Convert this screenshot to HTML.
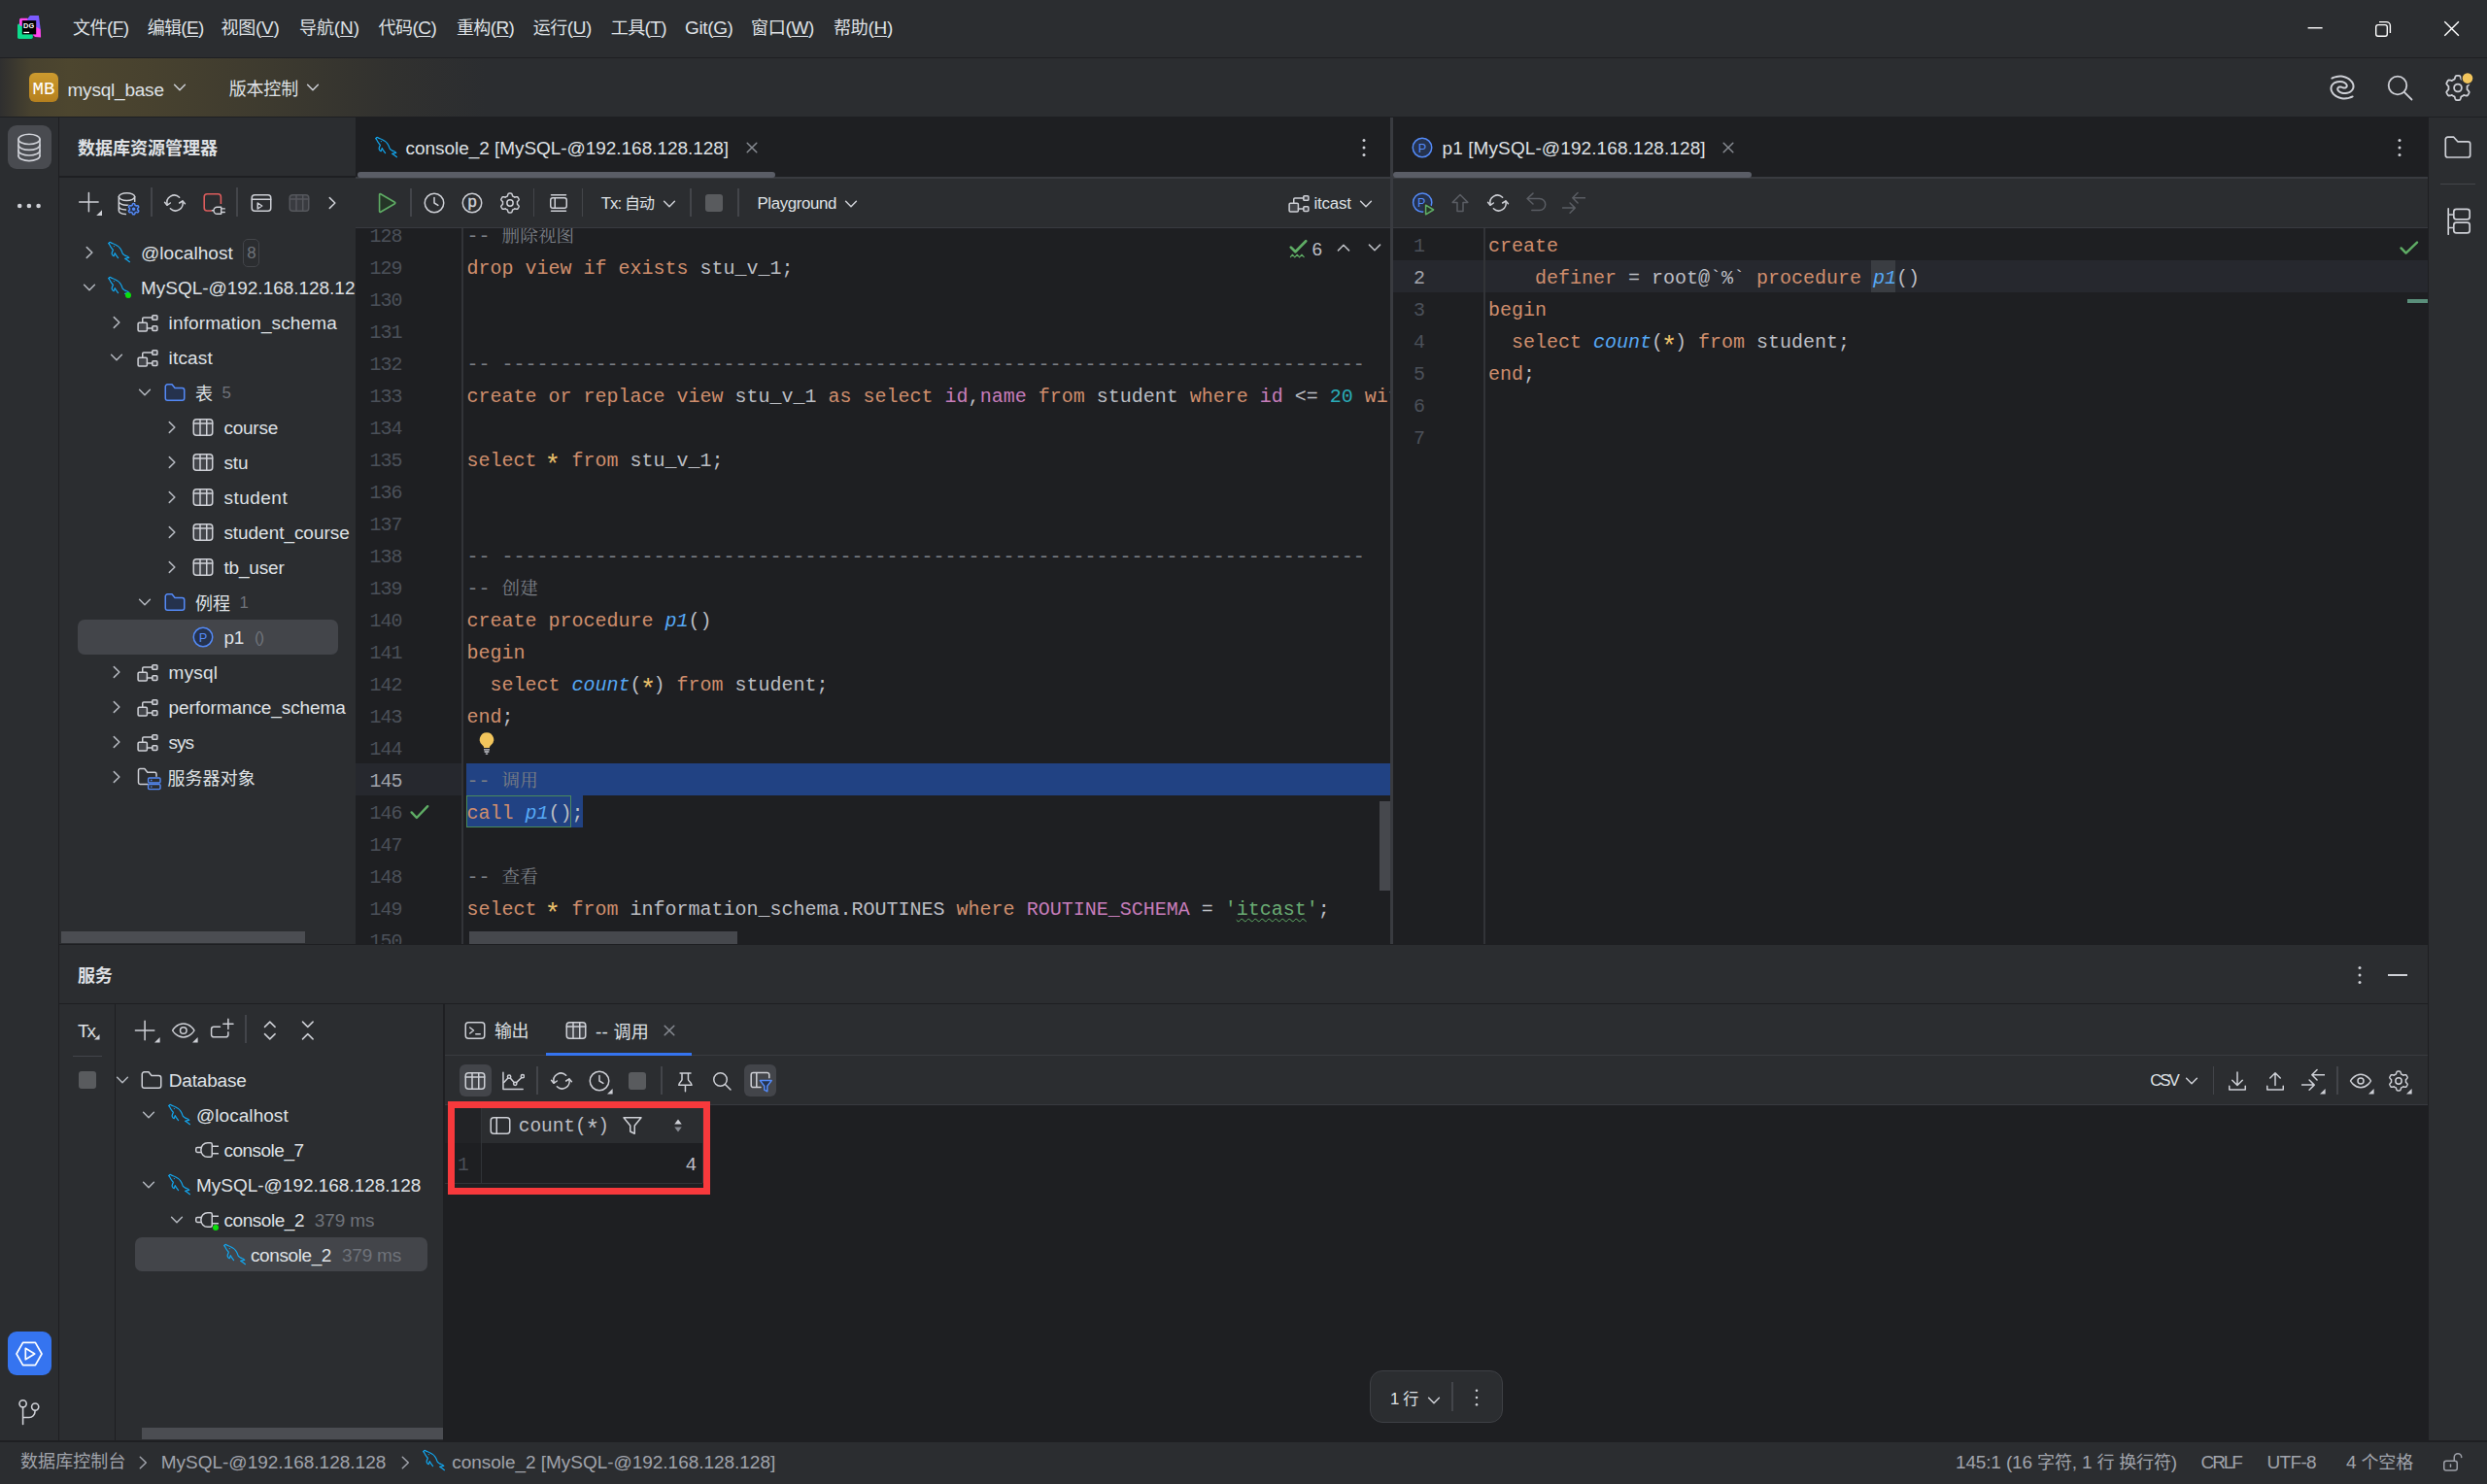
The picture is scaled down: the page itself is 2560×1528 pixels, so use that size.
<!DOCTYPE html>
<html lang="zh-CN"><head><meta charset="utf-8"><title>mysql_base – console_2</title><style>
html,body{margin:0;padding:0;}
body{width:2560px;height:1528px;overflow:hidden;background:#2b2d30;position:relative;font-family:"Liberation Sans","Noto Sans CJK SC",sans-serif;-webkit-font-smoothing:antialiased;}
div,span.t,svg{position:absolute;}
span.t{white-space:pre;display:block;font-family:"Liberation Sans","Noto Sans CJK SC",sans-serif;}
span.t.m{font-family:"Liberation Mono","Noto Sans CJK SC",monospace;}
span.a{font-size:1.055em;}
.cl{white-space:pre;font-family:"Liberation Mono","Noto Serif CJK SC",monospace;font-size:20px;line-height:33px;height:33px;}
.cl span{position:static;}
u{text-decoration-thickness:1px;text-underline-offset:2px;}
</style></head>
<body>
<div style="left:0px;top:0px;width:2560px;height:59px;background:#2b2d30;"></div>
<div style="left:0px;top:59px;width:2560px;height:1px;background:#1e1f22;"></div>
<div style="left:0px;top:60px;width:2560px;height:60px;background:#2b2d30;background:linear-gradient(90deg,#2f2f2f 0px,#48422f 32px,#4d462f 70px,#48422f 150px,#3d3a2f 280px,#31312f 400px,#2b2d30 500px,#2b2d30 100%);"></div>
<div style="left:0px;top:120px;width:2560px;height:1px;background:#1e1f22;"></div>
<div style="left:0px;top:121px;width:60px;height:1362px;background:#2b2d30;"></div>
<div style="left:60px;top:121px;width:1px;height:1362px;background:#1e1f22;"></div>
<div style="left:2500px;top:121px;width:60px;height:1362px;background:#2b2d30;"></div>
<div style="left:2499px;top:121px;width:1px;height:1362px;background:#1e1f22;"></div>
<div style="left:61px;top:121px;width:305px;height:851px;background:#2b2d30;"></div>
<div style="left:61px;top:181px;width:305px;height:2px;background:#1e1f22;"></div>
<div style="left:366px;top:121px;width:2133px;height:851px;background:#1e1f22;"></div>
<div style="left:366px;top:182px;width:2133px;height:2px;background:#393b40;"></div>
<div style="left:366px;top:184px;width:2133px;height:50px;background:#2b2d30;"></div>
<div style="left:366px;top:234px;width:2133px;height:1px;background:#393b40;"></div>
<div style="left:1431px;top:121px;width:3px;height:851px;background:#393b40;"></div>
<div style="left:61px;top:972px;width:2438px;height:1px;background:#1e1f22;"></div>
<div style="left:61px;top:973px;width:2438px;height:510px;background:#2b2d30;"></div>
<div style="left:61px;top:1033px;width:2438px;height:1px;background:#1e1f22;"></div>
<div style="left:118px;top:1034px;width:1px;height:449px;background:#1e1f22;"></div>
<div style="left:456px;top:1034px;width:2px;height:449px;background:#1e1f22;"></div>
<div style="left:458px;top:1086px;width:2041px;height:1px;background:#393b40;"></div>
<div style="left:458px;top:1137px;width:2041px;height:1px;background:#393b40;"></div>
<div style="left:458px;top:1138px;width:2041px;height:345px;background:#1e1f22;"></div>
<div style="left:0px;top:1483px;width:2560px;height:2px;background:#1e1f22;"></div>
<div style="left:0px;top:1485px;width:2560px;height:43px;background:#2b2d30;"></div>
<svg style="left:17px;top:15px;" width="26" height="26" viewBox="0 0 26 26" fill="none"><rect x="1" y="9.5" width="15.8" height="15.4" rx="1.6" fill="#0ddb8c"/>
<rect x="3" y="3.7" width="9.5" height="8" rx="1.6" fill="#ff45ed"/>
<path d="M11.3 4.3L13.9 1.1h9l1.9 14.1-4.8-.2-9-7z" fill="#7b5bff"/>
<path d="M19 12l5.8 3.2.3 8.4-6.1-.6-2.2-2z" fill="#ff45ed"/>
<rect x="5.8" y="6.1" width="14.4" height="14.3" fill="#000"/>
<text x="7.1" y="13.9" font-family="Liberation Sans, sans-serif" font-size="6.6" font-weight="bold" fill="#fff" textLength="11" lengthAdjust="spacingAndGlyphs">DG</text>
<rect x="7.3" y="17.8" width="5.8" height="1.3" fill="#fff"/></svg>
<span id="t1" class="t" style="left:75px;top:15.96px;font-size:18px;line-height:25px;color:#dfe1e5;letter-spacing:-0.553px;">文件<span class="a">(</span><u><span class="a">F</span></u><span class="a">)</span></span>
<span id="t2" class="t" style="left:151.75px;top:15.96px;font-size:18px;line-height:25px;color:#dfe1e5;letter-spacing:-0.716px;">编辑<span class="a">(</span><u><span class="a">E</span></u><span class="a">)</span></span>
<span id="t3" class="t" style="left:227.5px;top:15.96px;font-size:18px;line-height:25px;color:#dfe1e5;letter-spacing:-0.266px;">视图<span class="a">(</span><u><span class="a">V</span></u><span class="a">)</span></span>
<span id="t4" class="t" style="left:308px;top:15.96px;font-size:18px;line-height:25px;color:#dfe1e5;letter-spacing:-0.075px;">导航<span class="a">(</span><u><span class="a">N</span></u><span class="a">)</span></span>
<span id="t5" class="t" style="left:389.5px;top:15.96px;font-size:18px;line-height:25px;color:#dfe1e5;letter-spacing:-0.525px;">代码<span class="a">(</span><u><span class="a">C</span></u><span class="a">)</span></span>
<span id="t6" class="t" style="left:470px;top:15.96px;font-size:18px;line-height:25px;color:#dfe1e5;letter-spacing:-0.625px;">重构<span class="a">(</span><u><span class="a">R</span></u><span class="a">)</span></span>
<span id="t7" class="t" style="left:548.75px;top:15.96px;font-size:18px;line-height:25px;color:#dfe1e5;letter-spacing:-0.475px;">运行<span class="a">(</span><u><span class="a">U</span></u><span class="a">)</span></span>
<span id="t8" class="t" style="left:628.75px;top:15.96px;font-size:18px;line-height:25px;color:#dfe1e5;letter-spacing:-0.603px;">工具<span class="a">(</span><u><span class="a">T</span></u><span class="a">)</span></span>
<span id="t9" class="t" style="left:705px;top:15.96px;font-size:18px;line-height:25px;color:#dfe1e5;letter-spacing:-0.367px;"><span class="a">Git(</span><u><span class="a">G</span></u><span class="a">)</span></span>
<span id="t10" class="t" style="left:773px;top:15.96px;font-size:18px;line-height:25px;color:#dfe1e5;letter-spacing:-0.316px;">窗口<span class="a">(</span><u><span class="a">W</span></u><span class="a">)</span></span>
<span id="t11" class="t" style="left:858px;top:15.96px;font-size:18px;line-height:25px;color:#dfe1e5;letter-spacing:-0.275px;">帮助<span class="a">(</span><u><span class="a">H</span></u><span class="a">)</span></span>
<svg style="left:2370px;top:15px;" width="170" height="30" viewBox="0 0 170 30" fill="none"><path d="M5.6 13.75h15" stroke="#fff" stroke-width="1.4"/>
<rect x="75.7" y="10.6" width="11.6" height="11.6" rx="2.2" stroke="#fff" stroke-width="1.4"/>
<path d="M79 7.6h7.4a4 4 0 0 1 4 4v7.3" stroke="#fff" stroke-width="1.4"/>
<path d="M146.3 7.2l14.6 14.6M160.9 7.2l-14.6 14.6" stroke="#fff" stroke-width="1.4"/></svg>
<div style="left:30px;top:75px;width:30px;height:30px;border-radius:6px;background:linear-gradient(180deg,#cc9a2e,#b5801e);"></div>
<span id="t12" class="t m" style="left:33.5px;top:78.74px;font-size:19px;line-height:27px;color:#fff;letter-spacing:0.094px;">MB</span>
<span id="t13" class="t" style="left:69.5px;top:79.56px;font-size:18px;line-height:25px;color:#dfe1e5;letter-spacing:-0.206px;"><span class="a">mysql_base</span></span>
<svg style="left:172.6px;top:78.0px;" width="24" height="24" viewBox="0 0 16 16" fill="none"><path d="M4.4 6.2l3.6 3.6 3.6-3.6" stroke="#ced0d6" stroke-width="1" fill="none" stroke-linecap="round" stroke-linejoin="round" /></svg>
<span id="t14" class="t" style="left:235.75px;top:79.56px;font-size:18px;line-height:25px;color:#dfe1e5;letter-spacing:-0.188px;">版本控制</span>
<svg style="left:310.4px;top:78.0px;" width="24" height="24" viewBox="0 0 16 16" fill="none"><path d="M4.4 6.2l3.6 3.6 3.6-3.6" stroke="#ced0d6" stroke-width="1" fill="none" stroke-linecap="round" stroke-linejoin="round" /></svg>
<svg style="left:2395.6px;top:74.95px;" width="30" height="30" viewBox="0 0 30 30" fill="none"><path d="M4.35 5.57C4.88 5.38 6.47 4.71 7.50 4.40C8.53 4.09 9.47 3.83 10.55 3.70C11.63 3.57 12.88 3.52 14.00 3.60C15.12 3.68 16.27 3.92 17.30 4.20C18.33 4.48 19.30 4.85 20.20 5.30C21.10 5.75 21.93 6.25 22.70 6.90C23.47 7.55 24.22 8.38 24.80 9.20C25.38 10.02 25.92 10.93 26.20 11.80C26.48 12.67 26.55 13.60 26.50 14.40C26.45 15.20 26.22 15.93 25.90 16.60C25.58 17.27 25.13 17.86 24.60 18.40C24.07 18.94 23.47 19.47 22.70 19.85C21.93 20.23 20.90 20.50 20.00 20.70C19.10 20.90 18.17 21.06 17.30 21.06C16.43 21.06 15.57 20.90 14.80 20.70C14.03 20.50 13.32 20.20 12.70 19.85C12.08 19.50 11.50 19.05 11.10 18.60C10.70 18.15 10.42 17.61 10.30 17.16C10.18 16.71 10.27 16.26 10.40 15.90C10.53 15.54 10.82 15.23 11.10 15.00C11.38 14.77 11.74 14.59 12.10 14.50C12.46 14.41 12.87 14.41 13.25 14.46C13.63 14.51 14.21 14.74 14.40 14.80" stroke="#ced0d6" stroke-width="2" fill="none" stroke-linecap="round" stroke-linejoin="round" /><path d="M25.65 24.43C25.12 24.62 23.53 25.29 22.50 25.60C21.47 25.91 20.53 26.17 19.45 26.30C18.37 26.43 17.12 26.48 16.00 26.40C14.88 26.32 13.73 26.08 12.70 25.80C11.67 25.52 10.70 25.15 9.80 24.70C8.90 24.25 8.07 23.75 7.30 23.10C6.53 22.45 5.78 21.62 5.20 20.80C4.62 19.98 4.08 19.07 3.80 18.20C3.52 17.33 3.45 16.40 3.50 15.60C3.55 14.80 3.78 14.07 4.10 13.40C4.42 12.73 4.87 12.14 5.40 11.60C5.93 11.06 6.53 10.53 7.30 10.15C8.07 9.77 9.10 9.50 10.00 9.30C10.90 9.10 11.83 8.94 12.70 8.94C13.57 8.94 14.43 9.10 15.20 9.30C15.97 9.50 16.68 9.80 17.30 10.15C17.92 10.50 18.50 10.95 18.90 11.40C19.30 11.85 19.58 12.39 19.70 12.84C19.82 13.29 19.73 13.74 19.60 14.10C19.47 14.46 19.18 14.77 18.90 15.00C18.62 15.23 18.26 15.41 17.90 15.50C17.54 15.59 17.13 15.59 16.75 15.54C16.37 15.49 15.79 15.26 15.60 15.20" stroke="#ced0d6" stroke-width="2" fill="none" stroke-linecap="round" stroke-linejoin="round" /></svg>
<svg style="left:2456px;top:76px;" width="30" height="30" viewBox="0 0 30 30" fill="none"><circle cx="12" cy="12" r="9.3" stroke="#ced0d6" stroke-width="1.8" fill="none"/><path d="M18.8 18.8L26.5 26.5" stroke="#ced0d6" stroke-width="1.8" fill="none" stroke-linecap="round" stroke-linejoin="round" /></svg>
<svg style="left:2515.5px;top:75.5px;overflow:visible;" width="29" height="29" viewBox="0 0 29 29" fill="none"><path d="M14.00 1.90L14.44 1.91L14.88 1.93L15.32 1.97L15.75 2.02L16.16 2.24L16.48 2.83L16.75 3.46L16.98 4.10L17.17 4.74L17.33 5.34L17.60 5.60L17.90 5.73L18.21 5.87L18.51 6.02L18.80 6.19L19.09 6.36L19.37 6.54L19.64 6.73L19.91 6.94L20.27 7.03L20.87 6.87L21.51 6.72L22.19 6.59L22.87 6.51L23.54 6.50L23.93 6.74L24.19 7.09L24.45 7.45L24.69 7.82L24.91 8.20L25.13 8.58L25.32 8.98L25.51 9.38L25.68 9.78L25.70 10.24L25.35 10.81L24.94 11.36L24.50 11.88L24.04 12.37L23.60 12.81L23.51 13.16L23.55 13.50L23.58 13.83L23.59 14.16L23.60 14.50L23.59 14.84L23.58 15.17L23.55 15.50L23.51 15.84L23.60 16.19L24.04 16.63L24.50 17.12L24.94 17.64L25.35 18.19L25.70 18.76L25.68 19.22L25.51 19.62L25.32 20.02L25.13 20.42L24.91 20.80L24.69 21.18L24.45 21.55L24.19 21.91L23.93 22.26L23.54 22.50L22.87 22.49L22.19 22.41L21.51 22.28L20.87 22.13L20.27 21.97L19.91 22.06L19.64 22.27L19.37 22.46L19.09 22.64L18.80 22.81L18.51 22.98L18.21 23.13L17.90 23.27L17.60 23.40L17.33 23.66L17.17 24.26L16.98 24.90L16.75 25.54L16.48 26.17L16.16 26.76L15.75 26.98L15.32 27.03L14.88 27.07L14.44 27.09L14.00 27.10L13.56 27.09L13.12 27.07L12.68 27.03L12.25 26.98L11.84 26.76L11.52 26.17L11.25 25.54L11.02 24.90L10.83 24.26L10.67 23.66L10.40 23.40L10.10 23.27L9.79 23.13L9.49 22.98L9.20 22.81L8.91 22.64L8.63 22.46L8.36 22.27L8.09 22.06L7.73 21.97L7.13 22.13L6.49 22.28L5.81 22.41L5.13 22.49L4.46 22.50L4.07 22.26L3.81 21.91L3.55 21.55L3.31 21.18L3.09 20.80L2.87 20.42L2.68 20.02L2.49 19.62L2.32 19.22L2.30 18.76L2.65 18.19L3.06 17.64L3.50 17.12L3.96 16.63L4.40 16.19L4.49 15.84L4.45 15.50L4.42 15.17L4.41 14.84L4.40 14.50L4.41 14.16L4.42 13.83L4.45 13.50L4.49 13.16L4.40 12.81L3.96 12.37L3.50 11.88L3.06 11.36L2.65 10.81L2.30 10.24L2.32 9.78L2.49 9.38L2.68 8.98L2.87 8.58L3.09 8.20L3.31 7.82L3.55 7.45L3.81 7.09L4.07 6.74L4.46 6.50L5.13 6.51L5.81 6.59L6.49 6.72L7.13 6.87L7.73 7.03L8.09 6.94L8.36 6.73L8.63 6.54L8.91 6.36L9.20 6.19L9.49 6.02L9.79 5.87L10.10 5.73L10.40 5.60L10.67 5.34L10.83 4.74L11.02 4.10L11.25 3.46L11.52 2.83L11.84 2.24L12.25 2.02L12.68 1.97L13.12 1.93L13.56 1.91Z" stroke="#ced0d6" stroke-width="1.8" fill="none" stroke-linecap="round" stroke-linejoin="round" /><circle cx="14" cy="14.5" r="3.9" stroke="#ced0d6" stroke-width="1.8" fill="none"/><circle cx="24" cy="4.6" r="6.6" fill="#2b2d30"/><circle cx="24" cy="4.6" r="5.3" fill="#f2c55c"/></svg>
<div style="left:7.5px;top:129px;width:45px;height:45px;border-radius:9px;background:#494b50;"></div>
<svg style="left:15px;top:135px;" width="30" height="34" viewBox="0 0 30 34" fill="none"><path d="M4 8.4v17.2M26 8.4v17.2" stroke="#ced0d6" stroke-width="1.6" fill="none" stroke-linecap="round" stroke-linejoin="round" /><ellipse cx="15" cy="8.4" rx="11" ry="5.1" stroke="#ced0d6" stroke-width="1.6"/><path d="M4 14.3c0 2.8 4.9 5.1 11 5.1s11-2.3 11-5.1M4 19.9c0 2.8 4.9 5.1 11 5.1s11-2.3 11-5.1M4 25.5c0 2.8 4.9 5.1 11 5.1s11-2.3 11-5.1" stroke="#ced0d6" stroke-width="1.6" fill="none" stroke-linecap="round" stroke-linejoin="round" /></svg>
<svg style="left:15px;top:205px;" width="30" height="14" viewBox="0 0 30 14" fill="none"><circle cx="5.2" cy="7" r="2.3" fill="#ced0d6"/><circle cx="14.9" cy="7" r="2.3" fill="#ced0d6"/><circle cx="24.6" cy="7" r="2.3" fill="#ced0d6"/></svg>
<div style="left:7.5px;top:1371px;width:45px;height:45px;border-radius:9px;background:#3574f0;"></div>
<svg style="left:15px;top:1378.5px;" width="30" height="30" viewBox="0 0 30 30" fill="none"><path d="M8.6 3.4h12.8L28 15 21.4 26.6H8.6L2 15z" stroke="#fff" stroke-width="1.7" fill="none" stroke-linecap="round" stroke-linejoin="round" /><path d="M11.3 9.3v11.4l9.4-5.7z" stroke="#fff" stroke-width="1.7" fill="none" stroke-linecap="round" stroke-linejoin="round" /></svg>
<svg style="left:15px;top:1438px;" width="30" height="32" viewBox="0 0 30 32" fill="none"><circle cx="8.6" cy="7.3" r="3.6" stroke="#ced0d6" stroke-width="1.6" fill="none"/><circle cx="21.2" cy="10.6" r="3.6" stroke="#ced0d6" stroke-width="1.6" fill="none"/><path d="M8.6 11v17.5M8.6 21.5h6.4a6 6 0 0 0 6-6v-1.2" stroke="#ced0d6" stroke-width="1.6" fill="none" stroke-linecap="round" stroke-linejoin="round" /></svg>
<svg style="left:2515px;top:138px;" width="30" height="27" viewBox="0 0 30 27" fill="none"><path d="M2.3 5.5a2.3 2.3 0 0 1 2.3-2.3h6.2l4 4.6h10.6a2.3 2.3 0 0 1 2.3 2.3v11.6a2.3 2.3 0 0 1-2.3 2.3H4.6a2.3 2.3 0 0 1-2.3-2.3z" stroke="#ced0d6" stroke-width="1.7" fill="none" stroke-linecap="round" stroke-linejoin="round" /></svg>
<div style="left:2512px;top:189px;width:36px;height:1px;background:#43454a;"></div>
<svg style="left:2516px;top:212px;" width="30" height="32" viewBox="0 0 30 32" fill="none"><path d="M4.2 2.8v26.4M4.2 9h5M4.2 22.5h5" stroke="#ced0d6" stroke-width="1.7" fill="none" stroke-linecap="round" stroke-linejoin="round" /><rect x="9.8" y="3.3" width="16.4" height="10.6" rx="2.6" stroke="#ced0d6" stroke-width="1.7" fill="none"/><rect x="9.8" y="17.2" width="16.4" height="10.6" rx="2.6" stroke="#ced0d6" stroke-width="1.7" fill="none"/></svg>
<div style="left:0;top:0;width:366px;height:972px;overflow:hidden;">
<span id="t15" class="t" style="left:80px;top:140.56px;font-size:18px;line-height:25px;color:#dfe1e5;letter-spacing:0.000px;font-weight:bold;">数据库资源管理器</span>
<svg style="left:79px;top:196px;" width="28" height="28" viewBox="0 0 28 28" fill="none"><path d="M12.4 2.4v19.4M2.7 12.1h19.4" stroke="#ced0d6" stroke-width="1.5" fill="none" stroke-linecap="round" stroke-linejoin="round" /><path d="M26 20.2v5.8h-5.8z" fill="#ced0d6"/></svg>
<svg style="left:119px;top:196px;" width="28" height="28" viewBox="0 0 28 28" fill="none"><ellipse cx="11.5" cy="6.6" rx="8.2" ry="3.9" stroke="#ced0d6" stroke-width="1.5"/><path d="M3.3 6.6v14.2c0 1.9 3 3.5 7 3.8M19.7 6.6v5M3.3 11.5c0 2.1 3.7 3.8 8.2 3.8 1.2 0 2.3-.1 3.3-.3M3.3 16.2c0 2 3.2 3.6 7.3 3.8" stroke="#ced0d6" stroke-width="1.5" fill="none" stroke-linecap="round" stroke-linejoin="round" /><circle cx="18.6" cy="19.2" r="7" fill="#2b2d30"/><path d="M18.60 13.60L18.99 13.61L19.38 13.65L19.70 14.05L19.90 14.67L20.03 15.28L20.27 15.45L20.52 15.58L20.77 15.72L21.01 15.88L21.28 16.00L21.87 15.81L22.51 15.68L23.01 15.75L23.24 16.07L23.45 16.40L23.63 16.75L23.79 17.10L23.61 17.57L23.17 18.06L22.71 18.48L22.68 18.77L22.70 19.06L22.70 19.34L22.68 19.63L22.71 19.92L23.17 20.34L23.61 20.83L23.79 21.30L23.63 21.65L23.45 22.00L23.24 22.33L23.01 22.65L22.51 22.72L21.87 22.59L21.28 22.40L21.01 22.52L20.77 22.68L20.52 22.82L20.27 22.95L20.03 23.12L19.90 23.73L19.70 24.35L19.38 24.75L18.99 24.79L18.60 24.80L18.21 24.79L17.82 24.75L17.50 24.35L17.30 23.73L17.17 23.12L16.93 22.95L16.68 22.82L16.43 22.68L16.19 22.52L15.92 22.40L15.33 22.59L14.69 22.72L14.19 22.65L13.96 22.33L13.75 22.00L13.57 21.65L13.41 21.30L13.59 20.83L14.03 20.34L14.49 19.92L14.52 19.63L14.50 19.34L14.50 19.06L14.52 18.77L14.49 18.48L14.03 18.06L13.59 17.57L13.41 17.10L13.57 16.75L13.75 16.40L13.96 16.07L14.19 15.75L14.69 15.68L15.33 15.81L15.92 16.00L16.19 15.88L16.43 15.72L16.68 15.58L16.93 15.45L17.17 15.28L17.30 14.67L17.50 14.05L17.82 13.65L18.21 13.61Z" stroke="#548af7" stroke-width="1.5" fill="#25324d" stroke-linecap="round" stroke-linejoin="round" /><circle cx="18.6" cy="19.2" r="1.1" stroke="#548af7" stroke-width="1.3" fill="#548af7"/></svg>
<div style="left:155px;top:193px;width:1.5px;height:30px;background:#43454a;"></div>
<svg style="left:168.0px;top:197.0px;" width="24" height="24" viewBox="0 0 16 16" fill="none"><g transform="translate(8 8) scale(0.94) translate(-8 -8)"><path d="M2.5 9.2A5.3 5.3 0 0 1 11.3 3.9M13.5 6.8A5.3 5.3 0 0 1 4.7 12.1" stroke="#ced0d6" stroke-width="1.06" fill="none" stroke-linecap="round" stroke-linejoin="round" /><path d="M0.6 7.5L2.3 9.6L4.7 8.0M11.3 8.0L13.7 6.5L15.4 8.5" stroke="#ced0d6" stroke-width="1.06" fill="none" stroke-linecap="round" stroke-linejoin="round" /></g></svg>
<svg style="left:207px;top:196px;" width="28" height="28" viewBox="0 0 28 28" fill="none"><rect x="3.2" y="3.8" width="17.2" height="17.2" rx="3" stroke="#db5c5c" stroke-width="1.6" fill="none"/><rect x="11" y="14" width="17" height="14" fill="#2b2d30"/><path d="M16.5 17.2h4.2v7h-4.2a3.5 3.5 0 0 1 0-7zM20.7 18.9h3.6M20.7 22.5h3.6M13 20.7h-1.6" stroke="#ced0d6" stroke-width="1.4" fill="none" stroke-linecap="round" stroke-linejoin="round" /></svg>
<div style="left:243px;top:193px;width:1.5px;height:30px;background:#43454a;"></div>
<svg style="left:257.0px;top:197.0px;" width="24" height="24" viewBox="0 0 16 16" fill="none"><rect x="1.5" y="2.5" width="13" height="11" rx="2" stroke="#ced0d6" stroke-width="1" fill="none"/><path d="M1.5 5.5h13" stroke="#ced0d6" stroke-width="1" fill="none" stroke-linecap="round" stroke-linejoin="round" /><path d="M5.5 8l3 2-3 2z" stroke="#ced0d6" stroke-width="1" fill="none" stroke-linecap="round" stroke-linejoin="round" /></svg>
<svg style="left:295.5px;top:197.0px;" width="24" height="24" viewBox="0 0 16 16" fill="none"><rect x="1.5" y="2.5" width="13" height="11" rx="2" stroke="#55575c" stroke-width="1" fill="#393b40"/><path d="M1.5 5.4h13M6 2.5v11M10.5 2.5v11" stroke="#55575c" stroke-width="1" fill="none" stroke-linecap="round" stroke-linejoin="round" /></svg>
<svg style="left:329.5px;top:197.0px;" width="24" height="24" viewBox="0 0 16 16" fill="none"><path d="M6.2 4.4l3.7 3.6-3.7 3.6" stroke="#ced0d6" stroke-width="1" fill="none" stroke-linecap="round" stroke-linejoin="round" /></svg>
<div style="left:79.5px;top:637.5px;width:268px;height:36px;border-radius:7px;background:#43454a;"></div>
<svg style="left:79.5px;top:248.0px;" width="24" height="24" viewBox="0 0 16 16" fill="none"><path d="M6.2 4.4l3.7 3.6-3.7 3.6" stroke="#b4b8bf" stroke-width="1" fill="none" stroke-linecap="round" stroke-linejoin="round" /></svg>
<svg style="left:111.2px;top:248.0px;" width="24" height="24" viewBox="0 0 16 16" fill="none"><path d="M0.58 1.67C0.74 1.53 1.15 0.86 1.55 0.86C1.95 0.86 2.43 1.40 3.00 1.67C3.57 1.94 4.30 2.15 4.95 2.47C5.60 2.79 6.30 3.14 6.89 3.60C7.48 4.06 8.07 4.65 8.50 5.22C8.93 5.79 9.18 6.38 9.48 7.00C9.78 7.62 9.89 8.43 10.29 8.94C10.69 9.45 11.34 9.76 11.90 10.08C12.46 10.40 13.25 10.64 13.68 10.88C14.11 11.12 14.36 11.42 14.49 11.53L13.36 11.77L11.74 12.18L13.3 13.2L14.98 14.44" stroke="#12a6ee" stroke-width="0.8" fill="none" stroke-linecap="round" stroke-linejoin="round" /><path d="M0.58 1.67C0.71 1.89 1.12 2.50 1.39 2.96C1.66 3.42 1.93 3.99 2.20 4.42C2.47 4.85 2.77 5.23 3.00 5.55C3.23 5.87 3.57 6.01 3.57 6.36C3.57 6.71 3.13 7.25 3.00 7.65C2.87 8.05 2.71 8.40 2.77 8.78C2.83 9.16 3.10 9.63 3.33 9.91C3.56 10.19 4.00 10.38 4.14 10.48L4.46 9.59L4.79 8.46L5.6 9.75L7.05 11.69" stroke="#12a6ee" stroke-width="0.8" fill="none" stroke-linecap="round" stroke-linejoin="round" /><circle cx="4.22" cy="3.69" r="0.42" fill="#12a6ee"/></svg>
<span id="t16" class="t" style="left:145.0px;top:248.26px;font-size:18px;line-height:25px;color:#dfe1e5;letter-spacing:0.060px;"><span class="a">@localhost</span></span>
<div style="left:250px;top:245.5px;width:17px;height:29px;border-radius:5px;border:1px solid #43454a;box-sizing:border-box;"></div>
<span id="t17" class="t" style="left:254.3px;top:249.86px;font-size:16px;line-height:22px;color:#6f737a;"><span class="a">8</span></span>
<svg style="left:79.5px;top:284.0px;" width="24" height="24" viewBox="0 0 16 16" fill="none"><path d="M4.4 6.2l3.6 3.6 3.6-3.6" stroke="#b4b8bf" stroke-width="1" fill="none" stroke-linecap="round" stroke-linejoin="round" /></svg>
<svg style="left:111.2px;top:284.0px;" width="24" height="24" viewBox="0 0 16 16" fill="none"><path d="M0.58 1.67C0.74 1.53 1.15 0.86 1.55 0.86C1.95 0.86 2.43 1.40 3.00 1.67C3.57 1.94 4.30 2.15 4.95 2.47C5.60 2.79 6.30 3.14 6.89 3.60C7.48 4.06 8.07 4.65 8.50 5.22C8.93 5.79 9.18 6.38 9.48 7.00C9.78 7.62 9.89 8.43 10.29 8.94C10.69 9.45 11.34 9.76 11.90 10.08C12.46 10.40 13.25 10.64 13.68 10.88C14.11 11.12 14.36 11.42 14.49 11.53L13.36 11.77L11.74 12.18L13.3 13.2L14.98 14.44" stroke="#12a6ee" stroke-width="0.8" fill="none" stroke-linecap="round" stroke-linejoin="round" /><path d="M0.58 1.67C0.71 1.89 1.12 2.50 1.39 2.96C1.66 3.42 1.93 3.99 2.20 4.42C2.47 4.85 2.77 5.23 3.00 5.55C3.23 5.87 3.57 6.01 3.57 6.36C3.57 6.71 3.13 7.25 3.00 7.65C2.87 8.05 2.71 8.40 2.77 8.78C2.83 9.16 3.10 9.63 3.33 9.91C3.56 10.19 4.00 10.38 4.14 10.48L4.46 9.59L4.79 8.46L5.6 9.75L7.05 11.69" stroke="#12a6ee" stroke-width="0.8" fill="none" stroke-linecap="round" stroke-linejoin="round" /><circle cx="4.22" cy="3.69" r="0.42" fill="#12a6ee"/></svg>
<div style="left:129.0px;top:301.2px;width:6.2px;height:6.2px;border-radius:50%;background:#0be00b;"></div>
<span id="t18" class="t" style="left:145.0px;top:284.26px;font-size:18px;line-height:25px;color:#dfe1e5;letter-spacing:-0.019px;"><span class="a">MySQL-@192.168.128.128</span></span>
<svg style="left:108.0px;top:320.0px;" width="24" height="24" viewBox="0 0 16 16" fill="none"><path d="M6.2 4.4l3.7 3.6-3.7 3.6" stroke="#b4b8bf" stroke-width="1" fill="none" stroke-linecap="round" stroke-linejoin="round" /></svg>
<svg style="left:140.0px;top:320.0px;" width="24" height="24" viewBox="0 0 16 16" fill="none"><rect x="1.4" y="8.2" width="6.2" height="5.8" rx="0.8" stroke="#ced0d6" stroke-width="1" fill="#43454a"/><rect x="11.2" y="3.1" width="3.4" height="3.1" rx="0.6" stroke="#ced0d6" stroke-width="1" fill="#43454a"/><rect x="11.2" y="10.5" width="3.4" height="3.1" rx="0.6" stroke="#ced0d6" stroke-width="1" fill="#43454a"/><path d="M4.5 8.2V5.4a.8.8 0 0 1 .8-.8H11.2M7.6 12H11.2" stroke="#ced0d6" stroke-width="1" fill="none" stroke-linecap="round" stroke-linejoin="round" /></svg>
<span id="t19" class="t" style="left:173.6px;top:320.26px;font-size:18px;line-height:25px;color:#dfe1e5;letter-spacing:0.130px;"><span class="a">information_schema</span></span>
<svg style="left:108.0px;top:356.0px;" width="24" height="24" viewBox="0 0 16 16" fill="none"><path d="M4.4 6.2l3.6 3.6 3.6-3.6" stroke="#b4b8bf" stroke-width="1" fill="none" stroke-linecap="round" stroke-linejoin="round" /></svg>
<svg style="left:140.0px;top:356.0px;" width="24" height="24" viewBox="0 0 16 16" fill="none"><rect x="1.4" y="8.2" width="6.2" height="5.8" rx="0.8" stroke="#ced0d6" stroke-width="1" fill="#43454a"/><rect x="11.2" y="3.1" width="3.4" height="3.1" rx="0.6" stroke="#ced0d6" stroke-width="1" fill="#43454a"/><rect x="11.2" y="10.5" width="3.4" height="3.1" rx="0.6" stroke="#ced0d6" stroke-width="1" fill="#43454a"/><path d="M4.5 8.2V5.4a.8.8 0 0 1 .8-.8H11.2M7.6 12H11.2" stroke="#ced0d6" stroke-width="1" fill="none" stroke-linecap="round" stroke-linejoin="round" /></svg>
<span id="t20" class="t" style="left:173.6px;top:356.26px;font-size:18px;line-height:25px;color:#dfe1e5;letter-spacing:0.165px;"><span class="a">itcast</span></span>
<svg style="left:137.0px;top:392.0px;" width="24" height="24" viewBox="0 0 16 16" fill="none"><path d="M4.4 6.2l3.6 3.6 3.6-3.6" stroke="#b4b8bf" stroke-width="1" fill="none" stroke-linecap="round" stroke-linejoin="round" /></svg>
<svg style="left:168.0px;top:392.0px;" width="24" height="24" viewBox="0 0 16 16" fill="none"><path d="M1.5 4a1.5 1.5 0 0 1 1.5-1.5h3l2 2.5h5a1.5 1.5 0 0 1 1.5 1.5v5.5a1.5 1.5 0 0 1-1.5 1.5H3a1.5 1.5 0 0 1-1.5-1.5z" stroke="#548af7" stroke-width="1" fill="#25324d" stroke-linecap="round" stroke-linejoin="round" /></svg>
<span id="t21" class="t" style="left:201px;top:393.76px;font-size:18px;line-height:25px;color:#dfe1e5;">表</span>
<span id="t22" class="t" style="left:228.6px;top:394.06px;font-size:16px;line-height:22px;color:#6f737a;"><span class="a">5</span></span>
<svg style="left:164.6px;top:428.0px;" width="24" height="24" viewBox="0 0 16 16" fill="none"><path d="M6.2 4.4l3.7 3.6-3.7 3.6" stroke="#b4b8bf" stroke-width="1" fill="none" stroke-linecap="round" stroke-linejoin="round" /></svg>
<svg style="left:197.0px;top:428.0px;" width="24" height="24" viewBox="0 0 16 16" fill="none"><rect x="1.5" y="2.5" width="13" height="11" rx="2" stroke="#ced0d6" stroke-width="1" fill="#43454a"/><path d="M1.5 5.4h13M6 2.5v11M10.5 2.5v11" stroke="#ced0d6" stroke-width="1" fill="none" stroke-linecap="round" stroke-linejoin="round" /></svg>
<span id="t23" class="t" style="left:230.4px;top:428.26px;font-size:18px;line-height:25px;color:#dfe1e5;letter-spacing:-0.231px;"><span class="a">course</span></span>
<svg style="left:164.6px;top:464.0px;" width="24" height="24" viewBox="0 0 16 16" fill="none"><path d="M6.2 4.4l3.7 3.6-3.7 3.6" stroke="#b4b8bf" stroke-width="1" fill="none" stroke-linecap="round" stroke-linejoin="round" /></svg>
<svg style="left:197.0px;top:464.0px;" width="24" height="24" viewBox="0 0 16 16" fill="none"><rect x="1.5" y="2.5" width="13" height="11" rx="2" stroke="#ced0d6" stroke-width="1" fill="#43454a"/><path d="M1.5 5.4h13M6 2.5v11M10.5 2.5v11" stroke="#ced0d6" stroke-width="1" fill="none" stroke-linecap="round" stroke-linejoin="round" /></svg>
<span id="t24" class="t" style="left:230.4px;top:464.26px;font-size:18px;line-height:25px;color:#dfe1e5;letter-spacing:-0.076px;"><span class="a">stu</span></span>
<svg style="left:164.6px;top:500.0px;" width="24" height="24" viewBox="0 0 16 16" fill="none"><path d="M6.2 4.4l3.7 3.6-3.7 3.6" stroke="#b4b8bf" stroke-width="1" fill="none" stroke-linecap="round" stroke-linejoin="round" /></svg>
<svg style="left:197.0px;top:500.0px;" width="24" height="24" viewBox="0 0 16 16" fill="none"><rect x="1.5" y="2.5" width="13" height="11" rx="2" stroke="#ced0d6" stroke-width="1" fill="#43454a"/><path d="M1.5 5.4h13M6 2.5v11M10.5 2.5v11" stroke="#ced0d6" stroke-width="1" fill="none" stroke-linecap="round" stroke-linejoin="round" /></svg>
<span id="t25" class="t" style="left:230.4px;top:500.26px;font-size:18px;line-height:25px;color:#dfe1e5;letter-spacing:0.503px;"><span class="a">student</span></span>
<svg style="left:164.6px;top:536.0px;" width="24" height="24" viewBox="0 0 16 16" fill="none"><path d="M6.2 4.4l3.7 3.6-3.7 3.6" stroke="#b4b8bf" stroke-width="1" fill="none" stroke-linecap="round" stroke-linejoin="round" /></svg>
<svg style="left:197.0px;top:536.0px;" width="24" height="24" viewBox="0 0 16 16" fill="none"><rect x="1.5" y="2.5" width="13" height="11" rx="2" stroke="#ced0d6" stroke-width="1" fill="#43454a"/><path d="M1.5 5.4h13M6 2.5v11M10.5 2.5v11" stroke="#ced0d6" stroke-width="1" fill="none" stroke-linecap="round" stroke-linejoin="round" /></svg>
<span id="t26" class="t" style="left:230.4px;top:536.26px;font-size:18px;line-height:25px;color:#dfe1e5;letter-spacing:-0.038px;"><span class="a">student_course</span></span>
<svg style="left:164.6px;top:572.0px;" width="24" height="24" viewBox="0 0 16 16" fill="none"><path d="M6.2 4.4l3.7 3.6-3.7 3.6" stroke="#b4b8bf" stroke-width="1" fill="none" stroke-linecap="round" stroke-linejoin="round" /></svg>
<svg style="left:197.0px;top:572.0px;" width="24" height="24" viewBox="0 0 16 16" fill="none"><rect x="1.5" y="2.5" width="13" height="11" rx="2" stroke="#ced0d6" stroke-width="1" fill="#43454a"/><path d="M1.5 5.4h13M6 2.5v11M10.5 2.5v11" stroke="#ced0d6" stroke-width="1" fill="none" stroke-linecap="round" stroke-linejoin="round" /></svg>
<span id="t27" class="t" style="left:230.4px;top:572.26px;font-size:18px;line-height:25px;color:#dfe1e5;letter-spacing:-0.161px;"><span class="a">tb_user</span></span>
<svg style="left:137.0px;top:608.0px;" width="24" height="24" viewBox="0 0 16 16" fill="none"><path d="M4.4 6.2l3.6 3.6 3.6-3.6" stroke="#b4b8bf" stroke-width="1" fill="none" stroke-linecap="round" stroke-linejoin="round" /></svg>
<svg style="left:168.0px;top:608.0px;" width="24" height="24" viewBox="0 0 16 16" fill="none"><path d="M1.5 4a1.5 1.5 0 0 1 1.5-1.5h3l2 2.5h5a1.5 1.5 0 0 1 1.5 1.5v5.5a1.5 1.5 0 0 1-1.5 1.5H3a1.5 1.5 0 0 1-1.5-1.5z" stroke="#548af7" stroke-width="1" fill="#25324d" stroke-linecap="round" stroke-linejoin="round" /></svg>
<span id="t28" class="t" style="left:201px;top:609.76px;font-size:18px;line-height:25px;color:#dfe1e5;">例程</span>
<span id="t29" class="t" style="left:246.6px;top:610.06px;font-size:16px;line-height:22px;color:#6f737a;"><span class="a">1</span></span>
<svg style="left:197.0px;top:644.0px;" width="24" height="24" viewBox="0 0 16 16" fill="none"><circle cx="8" cy="8" r="6.5" stroke="#548af7" stroke-width="1" fill="#25324d"/><text x="8" y="11" font-family="Liberation Sans, sans-serif" font-size="8.5" font-weight="normal" fill="#548af7" text-anchor="middle" >P</text></svg>
<span id="t30" class="t" style="left:230.4px;top:644.26px;font-size:18px;line-height:25px;color:#dfe1e5;letter-spacing:-0.163px;"><span class="a">p1</span></span>
<span id="t31" class="t" style="left:262px;top:646.06px;font-size:16px;line-height:22px;color:#6f737a;letter-spacing:-1.117px;"><span class="a">()</span></span>
<svg style="left:108.0px;top:680.0px;" width="24" height="24" viewBox="0 0 16 16" fill="none"><path d="M6.2 4.4l3.7 3.6-3.7 3.6" stroke="#b4b8bf" stroke-width="1" fill="none" stroke-linecap="round" stroke-linejoin="round" /></svg>
<svg style="left:140.0px;top:680.0px;" width="24" height="24" viewBox="0 0 16 16" fill="none"><rect x="1.4" y="8.2" width="6.2" height="5.8" rx="0.8" stroke="#ced0d6" stroke-width="1" fill="#43454a"/><rect x="11.2" y="3.1" width="3.4" height="3.1" rx="0.6" stroke="#ced0d6" stroke-width="1" fill="#43454a"/><rect x="11.2" y="10.5" width="3.4" height="3.1" rx="0.6" stroke="#ced0d6" stroke-width="1" fill="#43454a"/><path d="M4.5 8.2V5.4a.8.8 0 0 1 .8-.8H11.2M7.6 12H11.2" stroke="#ced0d6" stroke-width="1" fill="none" stroke-linecap="round" stroke-linejoin="round" /></svg>
<span id="t32" class="t" style="left:173.6px;top:680.26px;font-size:18px;line-height:25px;color:#dfe1e5;letter-spacing:0.224px;"><span class="a">mysql</span></span>
<svg style="left:108.0px;top:716.0px;" width="24" height="24" viewBox="0 0 16 16" fill="none"><path d="M6.2 4.4l3.7 3.6-3.7 3.6" stroke="#b4b8bf" stroke-width="1" fill="none" stroke-linecap="round" stroke-linejoin="round" /></svg>
<svg style="left:140.0px;top:716.0px;" width="24" height="24" viewBox="0 0 16 16" fill="none"><rect x="1.4" y="8.2" width="6.2" height="5.8" rx="0.8" stroke="#ced0d6" stroke-width="1" fill="#43454a"/><rect x="11.2" y="3.1" width="3.4" height="3.1" rx="0.6" stroke="#ced0d6" stroke-width="1" fill="#43454a"/><rect x="11.2" y="10.5" width="3.4" height="3.1" rx="0.6" stroke="#ced0d6" stroke-width="1" fill="#43454a"/><path d="M4.5 8.2V5.4a.8.8 0 0 1 .8-.8H11.2M7.6 12H11.2" stroke="#ced0d6" stroke-width="1" fill="none" stroke-linecap="round" stroke-linejoin="round" /></svg>
<span id="t33" class="t" style="left:173.6px;top:716.26px;font-size:18px;line-height:25px;color:#dfe1e5;letter-spacing:-0.078px;"><span class="a">performance_schema</span></span>
<svg style="left:108.0px;top:752.0px;" width="24" height="24" viewBox="0 0 16 16" fill="none"><path d="M6.2 4.4l3.7 3.6-3.7 3.6" stroke="#b4b8bf" stroke-width="1" fill="none" stroke-linecap="round" stroke-linejoin="round" /></svg>
<svg style="left:140.0px;top:752.0px;" width="24" height="24" viewBox="0 0 16 16" fill="none"><rect x="1.4" y="8.2" width="6.2" height="5.8" rx="0.8" stroke="#ced0d6" stroke-width="1" fill="#43454a"/><rect x="11.2" y="3.1" width="3.4" height="3.1" rx="0.6" stroke="#ced0d6" stroke-width="1" fill="#43454a"/><rect x="11.2" y="10.5" width="3.4" height="3.1" rx="0.6" stroke="#ced0d6" stroke-width="1" fill="#43454a"/><path d="M4.5 8.2V5.4a.8.8 0 0 1 .8-.8H11.2M7.6 12H11.2" stroke="#ced0d6" stroke-width="1" fill="none" stroke-linecap="round" stroke-linejoin="round" /></svg>
<span id="t34" class="t" style="left:173.6px;top:752.26px;font-size:18px;line-height:25px;color:#dfe1e5;letter-spacing:-1.028px;"><span class="a">sys</span></span>
<svg style="left:108.0px;top:788.0px;" width="24" height="24" viewBox="0 0 16 16" fill="none"><path d="M6.2 4.4l3.7 3.6-3.7 3.6" stroke="#b4b8bf" stroke-width="1" fill="none" stroke-linecap="round" stroke-linejoin="round" /></svg>
<svg style="left:140px;top:788px;" width="26" height="26" viewBox="0 0 26 26" fill="none"><path d="M12 19.5H4.2a1.7 1.7 0 0 1-1.7-1.7V5.2a1.7 1.7 0 0 1 1.7-1.7h4.6l3 3.7h7.5a1.7 1.7 0 0 1 1.7 1.7v2.3" stroke="#ced0d6" stroke-width="1.5" fill="none" stroke-linecap="round" stroke-linejoin="round" /><rect x="12.6" y="13" width="12.4" height="5" rx="1" fill="#2b2d30" stroke="#548af7" stroke-width="1.4"/><rect x="12.6" y="19.6" width="12.4" height="5" rx="1" fill="#2b2d30" stroke="#548af7" stroke-width="1.4"/><path d="M15 15.5h1.5M15 22.1h1.5" stroke="#548af7" stroke-width="1.4"/></svg>
<span id="t35" class="t" style="left:172.5px;top:789.76px;font-size:18px;line-height:25px;color:#dfe1e5;letter-spacing:0.060px;">服务器对象</span>
<div style="left:62.5px;top:959px;width:251.5px;height:12px;background:#4b4d52;"></div>
</div>
<svg style="left:385.5px;top:140.0px;" width="24" height="24" viewBox="0 0 16 16" fill="none"><path d="M0.58 1.67C0.74 1.53 1.15 0.86 1.55 0.86C1.95 0.86 2.43 1.40 3.00 1.67C3.57 1.94 4.30 2.15 4.95 2.47C5.60 2.79 6.30 3.14 6.89 3.60C7.48 4.06 8.07 4.65 8.50 5.22C8.93 5.79 9.18 6.38 9.48 7.00C9.78 7.62 9.89 8.43 10.29 8.94C10.69 9.45 11.34 9.76 11.90 10.08C12.46 10.40 13.25 10.64 13.68 10.88C14.11 11.12 14.36 11.42 14.49 11.53L13.36 11.77L11.74 12.18L13.3 13.2L14.98 14.44" stroke="#12a6ee" stroke-width="0.8" fill="none" stroke-linecap="round" stroke-linejoin="round" /><path d="M0.58 1.67C0.71 1.89 1.12 2.50 1.39 2.96C1.66 3.42 1.93 3.99 2.20 4.42C2.47 4.85 2.77 5.23 3.00 5.55C3.23 5.87 3.57 6.01 3.57 6.36C3.57 6.71 3.13 7.25 3.00 7.65C2.87 8.05 2.71 8.40 2.77 8.78C2.83 9.16 3.10 9.63 3.33 9.91C3.56 10.19 4.00 10.38 4.14 10.48L4.46 9.59L4.79 8.46L5.6 9.75L7.05 11.69" stroke="#12a6ee" stroke-width="0.8" fill="none" stroke-linecap="round" stroke-linejoin="round" /><circle cx="4.22" cy="3.69" r="0.42" fill="#12a6ee"/></svg>
<span id="t36" class="t" style="left:417.5px;top:139.76px;font-size:18px;line-height:25px;color:#dfe1e5;letter-spacing:-0.038px;"><span class="a">console_2 [MySQL-@192.168.128.128]</span></span>
<svg style="left:761.75px;top:140.0px;" width="24" height="24" viewBox="0 0 16 16" fill="none"><path d="M4.8 4.8l6.4 6.4M11.2 4.8l-6.4 6.4" stroke="#868a91" stroke-width="1" fill="none" stroke-linecap="round" stroke-linejoin="round" /></svg>
<div style="left:367.5px;top:177px;width:430.5px;height:6px;border-radius:3px;background:#5a5d66;"></div>
<svg style="left:1392.0px;top:140.0px;" width="24" height="24" viewBox="0 0 16 16" fill="none"><circle cx="8" cy="3" r="1" fill="#ced0d6"/><circle cx="8" cy="8" r="1" fill="#ced0d6"/><circle cx="8" cy="13" r="1" fill="#ced0d6"/></svg>
<svg style="left:386px;top:196px;" width="26" height="26" viewBox="0 0 26 26" fill="none"><path d="M4.6 4.4v17.2a.8.8 0 0 0 1.2.7l14.6-8.6a.8.8 0 0 0 0-1.4L5.8 3.7a.8.8 0 0 0-1.2.7z" stroke="#5fad65" stroke-width="1.6" fill="#253627" stroke-linecap="round" stroke-linejoin="round" /></svg>
<div style="left:422.25px;top:194px;width:1.5px;height:29px;background:#43454a;"></div>
<svg style="left:435.0px;top:197.0px;" width="24" height="24" viewBox="0 0 16 16" fill="none"><circle cx="8" cy="8" r="6.5" stroke="#ced0d6" stroke-width="1" fill="none"/><path d="M8 4.3V8l2.6 1.6" stroke="#ced0d6" stroke-width="1" fill="none" stroke-linecap="round" stroke-linejoin="round" /></svg>
<svg style="left:473.5px;top:197.0px;" width="24" height="24" viewBox="0 0 16 16" fill="none"><circle cx="8" cy="8" r="6.5" stroke="#ced0d6" stroke-width="1" fill="none"/><text x="8" y="10.5" font-family="Liberation Sans, sans-serif" font-size="11" font-weight="normal" fill="#ced0d6" text-anchor="middle" stroke="#ced0d6" stroke-width="0.25">p</text></svg>
<svg style="left:512.5px;top:197.0px;" width="24" height="24" viewBox="0 0 16 16" fill="none"><path d="M8.00 1.40L8.35 1.41L8.69 1.44L9.03 1.48L9.30 1.89L9.50 2.40L9.65 2.91L9.79 3.33L10.03 3.43L10.27 3.54L10.50 3.67L10.72 3.81L10.94 3.95L11.15 4.11L11.58 4.02L12.10 3.90L12.64 3.82L13.13 3.85L13.34 4.12L13.54 4.41L13.72 4.70L13.88 5.00L14.03 5.32L14.16 5.63L13.94 6.07L13.60 6.50L13.24 6.89L12.94 7.22L12.97 7.48L12.99 7.74L13.00 8.00L12.99 8.26L12.97 8.52L12.94 8.78L13.24 9.11L13.60 9.50L13.94 9.93L14.16 10.37L14.03 10.68L13.88 11.00L13.72 11.30L13.54 11.59L13.34 11.88L13.13 12.15L12.64 12.18L12.10 12.10L11.58 11.98L11.15 11.89L10.94 12.05L10.72 12.19L10.50 12.33L10.27 12.46L10.03 12.57L9.79 12.67L9.65 13.09L9.50 13.60L9.30 14.11L9.03 14.52L8.69 14.56L8.35 14.59L8.00 14.60L7.65 14.59L7.31 14.56L6.97 14.52L6.70 14.11L6.50 13.60L6.35 13.09L6.21 12.67L5.97 12.57L5.73 12.46L5.50 12.33L5.28 12.19L5.06 12.05L4.85 11.89L4.42 11.98L3.90 12.10L3.36 12.18L2.87 12.15L2.66 11.88L2.46 11.59L2.28 11.30L2.12 11.00L1.97 10.68L1.84 10.37L2.06 9.93L2.40 9.50L2.76 9.11L3.06 8.78L3.03 8.52L3.01 8.26L3.00 8.00L3.01 7.74L3.03 7.48L3.06 7.22L2.76 6.89L2.40 6.50L2.06 6.07L1.84 5.63L1.97 5.32L2.12 5.00L2.28 4.70L2.46 4.41L2.66 4.12L2.87 3.85L3.36 3.82L3.90 3.90L4.42 4.02L4.85 4.11L5.06 3.95L5.28 3.81L5.50 3.67L5.73 3.54L5.97 3.43L6.21 3.33L6.35 2.91L6.50 2.40L6.70 1.89L6.97 1.48L7.31 1.44L7.65 1.41Z" stroke="#ced0d6" stroke-width="1" fill="none" stroke-linecap="round" stroke-linejoin="round" /><circle cx="8" cy="8" r="2.1" stroke="#ced0d6" stroke-width="1" fill="none"/></svg>
<div style="left:548.75px;top:194px;width:1.5px;height:29px;background:#43454a;"></div>
<svg style="left:562.5px;top:197.0px;" width="24" height="24" viewBox="0 0 16 16" fill="none"><path d="M3 2.5h10M3 13.5h10" stroke="#ced0d6" stroke-width="1" fill="none" stroke-linecap="round" stroke-linejoin="round" /><rect x="2.5" y="4.5" width="11" height="7" rx="1.5" stroke="#ced0d6" stroke-width="1" fill="none"/><path d="M5.5 4.5v7" stroke="#ced0d6" stroke-width="1" fill="none" stroke-linecap="round" stroke-linejoin="round" /></svg>
<div style="left:598.75px;top:194px;width:1.5px;height:29px;background:#43454a;"></div>
<span id="t37" class="t" style="left:618.75px;top:198.76px;font-size:16px;line-height:22px;color:#dfe1e5;letter-spacing:-0.971px;"><span class="a">Tx: </span>自动</span>
<svg style="left:677.0px;top:197.5px;" width="24" height="24" viewBox="0 0 16 16" fill="none"><path d="M4.4 6.2l3.6 3.6 3.6-3.6" stroke="#ced0d6" stroke-width="1" fill="none" stroke-linecap="round" stroke-linejoin="round" /></svg>
<div style="left:710.0px;top:194px;width:1.5px;height:29px;background:#43454a;"></div>
<div style="left:726px;top:200px;width:17.75px;height:17.5px;border-radius:3px;background:#595b5e;"></div>
<div style="left:759.25px;top:194px;width:1.5px;height:29px;background:#43454a;"></div>
<span id="t38" class="t" style="left:779.5px;top:198.76px;font-size:16px;line-height:22px;color:#dfe1e5;letter-spacing:-0.380px;"><span class="a">Playground</span></span>
<svg style="left:864.0px;top:197.5px;" width="24" height="24" viewBox="0 0 16 16" fill="none"><path d="M4.4 6.2l3.6 3.6 3.6-3.6" stroke="#ced0d6" stroke-width="1" fill="none" stroke-linecap="round" stroke-linejoin="round" /></svg>
<svg style="left:1324.75px;top:196.5px;" width="24" height="24" viewBox="0 0 16 16" fill="none"><rect x="1.4" y="8.2" width="6.2" height="5.8" rx="0.8" stroke="#ced0d6" stroke-width="1" fill="#43454a"/><rect x="11.2" y="3.1" width="3.4" height="3.1" rx="0.6" stroke="#ced0d6" stroke-width="1" fill="#43454a"/><rect x="11.2" y="10.5" width="3.4" height="3.1" rx="0.6" stroke="#ced0d6" stroke-width="1" fill="#43454a"/><path d="M4.5 8.2V5.4a.8.8 0 0 1 .8-.8H11.2M7.6 12H11.2" stroke="#ced0d6" stroke-width="1" fill="none" stroke-linecap="round" stroke-linejoin="round" /></svg>
<span id="t39" class="t" style="left:1352.5px;top:198.76px;font-size:16px;line-height:22px;color:#dfe1e5;letter-spacing:-0.185px;"><span class="a">itcast</span></span>
<svg style="left:1394.0px;top:197.5px;" width="24" height="24" viewBox="0 0 16 16" fill="none"><path d="M4.4 6.2l3.6 3.6 3.6-3.6" stroke="#ced0d6" stroke-width="1" fill="none" stroke-linecap="round" stroke-linejoin="round" /></svg>
<div style="left:366px;top:235px;width:1065px;height:737px;overflow:hidden;"><div style="left:-366px;top:-235px;width:2560px;height:1528px;">
<div style="left:366px;top:786px;width:110px;height:33px;background:#26282e;"></div>
<div style="left:475px;top:235px;width:2px;height:737px;background:#323438;"></div>
<div style="left:480px;top:786px;width:952px;height:33px;background:#214283;"></div>
<div style="left:480px;top:819px;width:120px;height:33px;background:#214283;"></div>
<div style="left:480px;top:819px;width:108px;height:33px;border:1px solid #4a8a5c;box-sizing:border-box;"></div>
<div class="cl" style="left:353.5px;width:60px;text-align:right;letter-spacing:-1px;top:227.2px;color:#4b5059;">128</div>
<div class="cl" style="left:480.5px;top:227.2px;font-size:20px;"><span style="color:#7a7e85;">-- <span style="font-size:18.6px;letter-spacing:0.1px">删除视图</span></span></div>
<div class="cl" style="left:353.5px;width:60px;text-align:right;letter-spacing:-1px;top:260.2px;color:#4b5059;">129</div>
<div class="cl" style="left:480.5px;top:260.2px;font-size:20px;"><span style="color:#cf8e6d;">drop view if exists </span><span style="color:#bcbec4;">stu_v_1;</span></div>
<div class="cl" style="left:353.5px;width:60px;text-align:right;letter-spacing:-1px;top:293.2px;color:#4b5059;">130</div>
<div class="cl" style="left:353.5px;width:60px;text-align:right;letter-spacing:-1px;top:326.2px;color:#4b5059;">131</div>
<div class="cl" style="left:353.5px;width:60px;text-align:right;letter-spacing:-1px;top:359.2px;color:#4b5059;">132</div>
<div class="cl" style="left:480.5px;top:359.2px;font-size:20px;"><span style="color:#7a7e85;">-- --------------------------------------------------------------------------</span></div>
<div class="cl" style="left:353.5px;width:60px;text-align:right;letter-spacing:-1px;top:392.2px;color:#4b5059;">133</div>
<div class="cl" style="left:480.5px;top:392.2px;font-size:20px;"><span style="color:#cf8e6d;">create or replace view </span><span style="color:#bcbec4;">stu_v_1 </span><span style="color:#cf8e6d;">as select </span><span style="color:#c77dbb;">id</span><span style="color:#bcbec4;">,</span><span style="color:#c77dbb;">name </span><span style="color:#cf8e6d;">from </span><span style="color:#bcbec4;">student </span><span style="color:#cf8e6d;">where </span><span style="color:#c77dbb;">id </span><span style="color:#bcbec4;">&lt;= </span><span style="color:#2aacb8;">20 </span><span style="color:#cf8e6d;">with cascaded check option</span><span style="color:#bcbec4;">;</span></div>
<div class="cl" style="left:353.5px;width:60px;text-align:right;letter-spacing:-1px;top:425.2px;color:#4b5059;">134</div>
<div class="cl" style="left:353.5px;width:60px;text-align:right;letter-spacing:-1px;top:458.2px;color:#4b5059;">135</div>
<div class="cl" style="left:480.5px;top:458.2px;font-size:20px;"><span style="color:#cf8e6d;">select </span><span style="color:#e8bf6a;display:inline-block;transform:translateY(5px) scale(1.35);">* </span><span style="color:#cf8e6d;">from </span><span style="color:#bcbec4;">stu_v_1;</span></div>
<div class="cl" style="left:353.5px;width:60px;text-align:right;letter-spacing:-1px;top:491.2px;color:#4b5059;">136</div>
<div class="cl" style="left:353.5px;width:60px;text-align:right;letter-spacing:-1px;top:524.2px;color:#4b5059;">137</div>
<div class="cl" style="left:353.5px;width:60px;text-align:right;letter-spacing:-1px;top:557.2px;color:#4b5059;">138</div>
<div class="cl" style="left:480.5px;top:557.2px;font-size:20px;"><span style="color:#7a7e85;">-- --------------------------------------------------------------------------</span></div>
<div class="cl" style="left:353.5px;width:60px;text-align:right;letter-spacing:-1px;top:590.2px;color:#4b5059;">139</div>
<div class="cl" style="left:480.5px;top:590.2px;font-size:20px;"><span style="color:#7a7e85;">-- <span style="font-size:18.6px;letter-spacing:0.1px">创建</span></span></div>
<div class="cl" style="left:353.5px;width:60px;text-align:right;letter-spacing:-1px;top:623.2px;color:#4b5059;">140</div>
<div class="cl" style="left:480.5px;top:623.2px;font-size:20px;"><span style="color:#cf8e6d;">create procedure </span><span style="color:#56a8f5;font-style:italic;">p1</span><span style="color:#bcbec4;">()</span></div>
<div class="cl" style="left:353.5px;width:60px;text-align:right;letter-spacing:-1px;top:656.2px;color:#4b5059;">141</div>
<div class="cl" style="left:480.5px;top:656.2px;font-size:20px;"><span style="color:#cf8e6d;">begin</span></div>
<div class="cl" style="left:353.5px;width:60px;text-align:right;letter-spacing:-1px;top:689.2px;color:#4b5059;">142</div>
<div class="cl" style="left:480.5px;top:689.2px;font-size:20px;"><span style="color:#cf8e6d;">  select </span><span style="color:#56a8f5;font-style:italic;">count</span><span style="color:#bcbec4;">(</span><span style="color:#e8bf6a;display:inline-block;transform:translateY(5px) scale(1.35);">*</span><span style="color:#bcbec4;">) </span><span style="color:#cf8e6d;">from </span><span style="color:#bcbec4;">student;</span></div>
<div class="cl" style="left:353.5px;width:60px;text-align:right;letter-spacing:-1px;top:722.2px;color:#4b5059;">143</div>
<div class="cl" style="left:480.5px;top:722.2px;font-size:20px;"><span style="color:#cf8e6d;">end</span><span style="color:#bcbec4;">;</span></div>
<div class="cl" style="left:353.5px;width:60px;text-align:right;letter-spacing:-1px;top:755.2px;color:#4b5059;">144</div>
<div class="cl" style="left:353.5px;width:60px;text-align:right;letter-spacing:-1px;top:788.2px;color:#a1a3ab;">145</div>
<div class="cl" style="left:480.5px;top:788.2px;font-size:20px;"><span style="color:#7a7e85;">-- <span style="font-size:18.6px;letter-spacing:0.1px">调用</span></span></div>
<div class="cl" style="left:353.5px;width:60px;text-align:right;letter-spacing:-1px;top:821.2px;color:#4b5059;">146</div>
<div class="cl" style="left:480.5px;top:821.2px;font-size:20px;"><span style="color:#cf8e6d;">call </span><span style="color:#56a8f5;font-style:italic;">p1</span><span style="color:#bcbec4;">();</span></div>
<div class="cl" style="left:353.5px;width:60px;text-align:right;letter-spacing:-1px;top:854.2px;color:#4b5059;">147</div>
<div class="cl" style="left:353.5px;width:60px;text-align:right;letter-spacing:-1px;top:887.2px;color:#4b5059;">148</div>
<div class="cl" style="left:480.5px;top:887.2px;font-size:20px;"><span style="color:#7a7e85;">-- <span style="font-size:18.6px;letter-spacing:0.1px">查看</span></span></div>
<div class="cl" style="left:353.5px;width:60px;text-align:right;letter-spacing:-1px;top:920.2px;color:#4b5059;">149</div>
<div class="cl" style="left:480.5px;top:920.2px;font-size:20px;"><span style="color:#cf8e6d;">select </span><span style="color:#e8bf6a;display:inline-block;transform:translateY(5px) scale(1.35);">* </span><span style="color:#cf8e6d;">from </span><span style="color:#bcbec4;">information_schema.ROUTINES </span><span style="color:#cf8e6d;">where </span><span style="color:#c77dbb;">ROUTINE_SCHEMA </span><span style="color:#bcbec4;">= </span><span style="color:#6aab73;">'</span><span style="color:#6aab73;text-decoration:underline wavy #5fad65 1px;text-underline-offset:3px;">itcast</span><span style="color:#6aab73;">'</span><span style="color:#bcbec4;">;</span></div>
<div class="cl" style="left:353.5px;width:60px;text-align:right;letter-spacing:-1px;top:953.2px;color:#4b5059;">150</div>
<svg style="left:421px;top:826px;" width="22" height="20" viewBox="0 0 22 20" fill="none"><path d="M2.6 10.4l5.3 5.6L19.2 4.2" stroke="#5fad65" stroke-width="2.4" fill="none" stroke-linecap="round" stroke-linejoin="round" stroke-linecap="butt" stroke-linejoin="miter"/></svg>
<svg style="left:490px;top:752px;" width="22" height="26" viewBox="0 0 22 26" fill="none"><path d="M11 2.2a7.3 7.3 0 0 0-4.2 13.2c.9.7 1.3 1.5 1.3 2.5h5.8c0-1 .4-1.8 1.3-2.5A7.3 7.3 0 0 0 11 2.2z" fill="#f2c55c"/><path d="M8 19.8h6M8.6 22h4.8M9.8 24.2h2.4" stroke="#ced0d6" stroke-width="1.3"/></svg>
<svg style="left:1326px;top:244px;" width="22" height="24" viewBox="0 0 22 24" fill="none"><path d="M2.8 10.6l4.6 4.6L18.2 4.2" stroke="#5fad65" stroke-width="2.7" fill="none" stroke-linecap="round" stroke-linejoin="round" stroke-linecap="butt" stroke-linejoin="miter"/><path d="M2.4 20.6l2-2.4 2.4 2.6 2.4-2.6 2.4 2.6 2.4-2.6 2.2 2.4" stroke="#5fad65" stroke-width="1.2" fill="none" stroke-linecap="round" stroke-linejoin="round" /></svg>
<span id="t40" class="t" style="left:1350.5px;top:243.56px;font-size:18px;line-height:25px;color:#bcbec4;"><span class="a">6</span></span>
<svg style="left:1370.75px;top:243.3px;" width="24" height="24" viewBox="0 0 16 16" fill="none"><path d="M4.3 9.9l3.7-3.7 3.7 3.7" stroke="#bcbec4" stroke-width="1" fill="none" stroke-linecap="round" stroke-linejoin="round" /></svg>
<svg style="left:1403.0px;top:243.0px;" width="24" height="24" viewBox="0 0 16 16" fill="none"><path d="M4.3 6.1l3.7 3.7 3.7-3.7" stroke="#bcbec4" stroke-width="1" fill="none" stroke-linecap="round" stroke-linejoin="round" /></svg>
<div style="left:1419.5px;top:825px;width:12px;height:92px;background:#46484d;"></div>
<div style="left:482.5px;top:959px;width:276px;height:13px;background:#46484d;"></div>
</div></div>
<svg style="left:1451.75px;top:140.0px;" width="24" height="24" viewBox="0 0 16 16" fill="none"><circle cx="8" cy="8" r="6.5" stroke="#548af7" stroke-width="1" fill="#25324d"/><text x="8" y="11" font-family="Liberation Sans, sans-serif" font-size="8.5" font-weight="normal" fill="#548af7" text-anchor="middle" >P</text></svg>
<span id="t41" class="t" style="left:1484.5px;top:139.76px;font-size:18px;line-height:25px;color:#dfe1e5;letter-spacing:0.107px;"><span class="a">p1 [MySQL-@192.168.128.128]</span></span>
<svg style="left:1766.75px;top:140.0px;" width="24" height="24" viewBox="0 0 16 16" fill="none"><path d="M4.8 4.8l6.4 6.4M11.2 4.8l-6.4 6.4" stroke="#868a91" stroke-width="1" fill="none" stroke-linecap="round" stroke-linejoin="round" /></svg>
<div style="left:1434px;top:177px;width:368.5px;height:6px;border-radius:3px;background:#5a5d66;"></div>
<svg style="left:2458.25px;top:139.6px;" width="24" height="24" viewBox="0 0 16 16" fill="none"><circle cx="8" cy="3" r="1" fill="#ced0d6"/><circle cx="8" cy="8" r="1" fill="#ced0d6"/><circle cx="8" cy="13" r="1" fill="#ced0d6"/></svg>
<svg style="left:1452px;top:196.3px;" width="28" height="28" viewBox="0 0 28 28" fill="none"><circle cx="12.2" cy="12.6" r="9.6" stroke="#548af7" stroke-width="1.5" fill="#25324d"/><text x="11.2" y="17" font-family="Liberation Sans, sans-serif" font-size="12.5" font-weight="normal" fill="#548af7" text-anchor="middle" >P</text><path d="M15 14.2v11.6l9.8-5.8z" fill="#2b2d30" stroke="#2b2d30" stroke-width="3.4" stroke-linejoin="round"/><path d="M15.6 15.2v9.6l8-4.8z" stroke="#5fad65" stroke-width="1.5" fill="#253627" stroke-linecap="round" stroke-linejoin="round" /></svg>
<svg style="left:1490.75px;top:197.0px;" width="24" height="24" viewBox="0 0 16 16" fill="none"><path d="M8 2.3L2.8 7.6H6v6h4v-6h3.2z" stroke="#5a5d63" stroke-width="1" fill="none" stroke-linecap="round" stroke-linejoin="round" /></svg>
<svg style="left:1530.0px;top:197.0px;" width="24" height="24" viewBox="0 0 16 16" fill="none"><g transform="translate(8 8) scale(0.94) translate(-8 -8)"><path d="M2.5 9.2A5.3 5.3 0 0 1 11.3 3.9M13.5 6.8A5.3 5.3 0 0 1 4.7 12.1" stroke="#ced0d6" stroke-width="1.06" fill="none" stroke-linecap="round" stroke-linejoin="round" /><path d="M0.6 7.5L2.3 9.6L4.7 8.0M11.3 8.0L13.7 6.5L15.4 8.5" stroke="#ced0d6" stroke-width="1.06" fill="none" stroke-linecap="round" stroke-linejoin="round" /></g></svg>
<svg style="left:1569.0px;top:197.0px;" width="24" height="24" viewBox="0 0 16 16" fill="none"><path d="M6 1.4L2 5l4 3.7M2 5h8.5a4 4 0 0 1 0 8H5.2" stroke="#5a5d63" stroke-width="1" fill="none" stroke-linecap="round" stroke-linejoin="round" /></svg>
<svg style="left:1608.0px;top:197.0px;" width="24" height="24" viewBox="0 0 16 16" fill="none"><path d="M15.8 4.5H7.2M10.7 1L7.2 4.5l3.5 3.5M0.2 11.4h8.6M5.4 8l3.4 3.4-3.4 3.4" stroke="#5a5d63" stroke-width="1" fill="none" stroke-linecap="round" stroke-linejoin="round" /></svg>
<div style="left:1434px;top:235px;width:1065px;height:737px;overflow:hidden;"><div style="left:-1434px;top:-235px;width:2560px;height:1528px;">
<div style="left:1434px;top:268px;width:1065px;height:33px;background:#26282e;"></div>
<div style="left:1526.5px;top:235px;width:2px;height:737px;background:#323438;"></div>
<div style="left:1926px;top:268px;width:25px;height:33px;background:#3a3d42;"></div>
<div class="cl" style="left:1406px;width:60px;text-align:right;letter-spacing:-1px;top:237.2px;color:#4b5059;">1</div>
<div class="cl" style="left:1532px;top:237.2px;font-size:20px;"><span style="color:#cf8e6d;">create</span></div>
<div class="cl" style="left:1406px;width:60px;text-align:right;letter-spacing:-1px;top:270.2px;color:#a1a3ab;">2</div>
<div class="cl" style="left:1532px;top:270.2px;font-size:20px;"><span style="color:#cf8e6d;">    definer </span><span style="color:#bcbec4;">= root@`%` </span><span style="color:#cf8e6d;">procedure </span><span style="color:#56a8f5;font-style:italic;">p1</span><span style="color:#bcbec4;">()</span></div>
<div class="cl" style="left:1406px;width:60px;text-align:right;letter-spacing:-1px;top:303.2px;color:#4b5059;">3</div>
<div class="cl" style="left:1532px;top:303.2px;font-size:20px;"><span style="color:#cf8e6d;">begin</span></div>
<div class="cl" style="left:1406px;width:60px;text-align:right;letter-spacing:-1px;top:336.2px;color:#4b5059;">4</div>
<div class="cl" style="left:1532px;top:336.2px;font-size:20px;"><span style="color:#cf8e6d;">  select </span><span style="color:#56a8f5;font-style:italic;">count</span><span style="color:#bcbec4;">(</span><span style="color:#e8bf6a;display:inline-block;transform:translateY(5px) scale(1.35);">*</span><span style="color:#bcbec4;">) </span><span style="color:#cf8e6d;">from </span><span style="color:#bcbec4;">student;</span></div>
<div class="cl" style="left:1406px;width:60px;text-align:right;letter-spacing:-1px;top:369.2px;color:#4b5059;">5</div>
<div class="cl" style="left:1532px;top:369.2px;font-size:20px;"><span style="color:#cf8e6d;">end</span><span style="color:#bcbec4;">;</span></div>
<div class="cl" style="left:1406px;width:60px;text-align:right;letter-spacing:-1px;top:402.2px;color:#4b5059;">6</div>
<div class="cl" style="left:1406px;width:60px;text-align:right;letter-spacing:-1px;top:435.2px;color:#4b5059;">7</div>
<svg style="left:2469px;top:246px;" width="22" height="20" viewBox="0 0 22 20" fill="none"><path d="M2.6 9.4l5 5.2L19 3.6" stroke="#5fad65" stroke-width="2.4" fill="none" stroke-linecap="round" stroke-linejoin="round" stroke-linecap="butt" stroke-linejoin="miter"/></svg>
<div style="left:2478px;top:308px;width:21px;height:3.5px;background:#5a8f7b;"></div>
</div></div>
<span id="t42" class="t" style="left:80px;top:992.76px;font-size:18px;line-height:25px;color:#dfe1e5;letter-spacing:-0.250px;font-weight:bold;">服务</span>
<svg style="left:2417.0px;top:992.3px;" width="24" height="24" viewBox="0 0 16 16" fill="none"><circle cx="8" cy="3" r="1" fill="#ced0d6"/><circle cx="8" cy="8" r="1" fill="#ced0d6"/><circle cx="8" cy="13" r="1" fill="#ced0d6"/></svg>
<div style="left:2458px;top:1003px;width:20px;height:1.5px;background:#ced0d6;"></div>
<span id="t43" class="t" style="left:80px;top:1048.86px;font-size:18px;line-height:25px;color:#dfe1e5;letter-spacing:-2.047px;"><span class="a">Tx</span></span>
<svg style="left:96px;top:1064px;" width="8" height="8" viewBox="0 0 8 8" fill="none"><path d="M6.5 1v5.5H1z" fill="#ced0d6"/></svg>
<div style="left:75px;top:1086.5px;width:30px;height:1.5px;background:#43454a;"></div>
<div style="left:81px;top:1103px;width:17.75px;height:17.75px;border-radius:3px;background:#595b5e;"></div>
<svg style="left:137px;top:1049px;" width="28" height="26" viewBox="0 0 28 26" fill="none"><path d="M12.1 2.3v19.4M2.4 12h19.4" stroke="#ced0d6" stroke-width="1.5" fill="none" stroke-linecap="round" stroke-linejoin="round" /></svg>
<svg style="left:159px;top:1068px;" width="6" height="6" viewBox="0 0 6 6" fill="none"><path d="M5.6 0V5.6H0z" fill="#ced0d6"/></svg>
<svg style="left:176px;top:1049px;" width="26" height="24" viewBox="0 0 26 24" fill="none"><path d="M1.6 12s3.8-7 11.2-7 11.2 7 11.2 7-3.8 7-11.2 7S1.6 12 1.6 12z" stroke="#ced0d6" stroke-width="1.5" fill="none" stroke-linecap="round" stroke-linejoin="round" /><circle cx="12.8" cy="12" r="3.3" stroke="#ced0d6" stroke-width="1.5" fill="none"/></svg>
<svg style="left:198px;top:1068px;" width="6" height="6" viewBox="0 0 6 6" fill="none"><path d="M5.6 0V5.6H0z" fill="#ced0d6"/></svg>
<svg style="left:215px;top:1046px;" width="28" height="26" viewBox="0 0 28 26" fill="none"><path d="M11.5 11.3H5a2.4 2.4 0 0 0-2.4 2.4v5.7a2.4 2.4 0 0 0 2.4 2.4h12.5a2.4 2.4 0 0 0 2.4-2.4v-2.6" stroke="#ced0d6" stroke-width="1.5" fill="none" stroke-linecap="round" stroke-linejoin="round" /><path d="M19.9 3.2v10.2M14.8 8.3h10.2" stroke="#ced0d6" stroke-width="1.5" fill="none" stroke-linecap="round" stroke-linejoin="round" /></svg>
<div style="left:252.25px;top:1045px;width:1.5px;height:29px;background:#43454a;"></div>
<svg style="left:268px;top:1049px;" width="20" height="24" viewBox="0 0 20 24" fill="none"><path d="M4.5 8.4l5.3-5.3 5.3 5.3M4.5 15.6l5.3 5.3 5.3-5.3" stroke="#ced0d6" stroke-width="1.5" fill="none" stroke-linecap="round" stroke-linejoin="round" /></svg>
<svg style="left:307px;top:1049px;" width="20" height="24" viewBox="0 0 20 24" fill="none"><path d="M4.5 3.1l5.3 5.3 5.3-5.3M4.5 20.9l5.3-5.3 5.3 5.3" stroke="#ced0d6" stroke-width="1.5" fill="none" stroke-linecap="round" stroke-linejoin="round" /></svg>
<div style="left:0;top:1034px;width:456px;height:449px;overflow:hidden;"><div style="left:0;top:-1034px;width:2560px;height:1528px;">
<div style="left:138.75px;top:1273.75px;width:300.75px;height:35.5px;border-radius:7px;background:#43454a;"></div>
<svg style="left:113.75px;top:1100.0px;" width="24" height="24" viewBox="0 0 16 16" fill="none"><path d="M4.4 6.2l3.6 3.6 3.6-3.6" stroke="#b4b8bf" stroke-width="1" fill="none" stroke-linecap="round" stroke-linejoin="round" /></svg>
<svg style="left:143.5px;top:1100.0px;" width="24" height="24" viewBox="0 0 16 16" fill="none"><path d="M1.5 4a1.5 1.5 0 0 1 1.5-1.5h3l2 2.5h5a1.5 1.5 0 0 1 1.5 1.5v5.5a1.5 1.5 0 0 1-1.5 1.5H3a1.5 1.5 0 0 1-1.5-1.5z" stroke="#ced0d6" stroke-width="1" fill="none" stroke-linecap="round" stroke-linejoin="round" /></svg>
<span id="t44" class="t" style="left:173.75px;top:1100.26px;font-size:18px;line-height:25px;color:#dfe1e5;letter-spacing:-0.160px;"><span class="a">Database</span></span>
<svg style="left:141.0px;top:1136.0px;" width="24" height="24" viewBox="0 0 16 16" fill="none"><path d="M4.4 6.2l3.6 3.6 3.6-3.6" stroke="#b4b8bf" stroke-width="1" fill="none" stroke-linecap="round" stroke-linejoin="round" /></svg>
<svg style="left:172.6px;top:1136.0px;" width="24" height="24" viewBox="0 0 16 16" fill="none"><path d="M0.58 1.67C0.74 1.53 1.15 0.86 1.55 0.86C1.95 0.86 2.43 1.40 3.00 1.67C3.57 1.94 4.30 2.15 4.95 2.47C5.60 2.79 6.30 3.14 6.89 3.60C7.48 4.06 8.07 4.65 8.50 5.22C8.93 5.79 9.18 6.38 9.48 7.00C9.78 7.62 9.89 8.43 10.29 8.94C10.69 9.45 11.34 9.76 11.90 10.08C12.46 10.40 13.25 10.64 13.68 10.88C14.11 11.12 14.36 11.42 14.49 11.53L13.36 11.77L11.74 12.18L13.3 13.2L14.98 14.44" stroke="#12a6ee" stroke-width="0.8" fill="none" stroke-linecap="round" stroke-linejoin="round" /><path d="M0.58 1.67C0.71 1.89 1.12 2.50 1.39 2.96C1.66 3.42 1.93 3.99 2.20 4.42C2.47 4.85 2.77 5.23 3.00 5.55C3.23 5.87 3.57 6.01 3.57 6.36C3.57 6.71 3.13 7.25 3.00 7.65C2.87 8.05 2.71 8.40 2.77 8.78C2.83 9.16 3.10 9.63 3.33 9.91C3.56 10.19 4.00 10.38 4.14 10.48L4.46 9.59L4.79 8.46L5.6 9.75L7.05 11.69" stroke="#12a6ee" stroke-width="0.8" fill="none" stroke-linecap="round" stroke-linejoin="round" /><circle cx="4.22" cy="3.69" r="0.42" fill="#12a6ee"/></svg>
<span id="t45" class="t" style="left:202px;top:1136.26px;font-size:18px;line-height:25px;color:#dfe1e5;letter-spacing:0.055px;"><span class="a">@localhost</span></span>
<svg style="left:201.0px;top:1172.0px;" width="24" height="24" viewBox="0 0 16 16" fill="none"><path d="M8.4 3.1H10.5a1 1 0 0 1 1 1v7.8a1 1 0 0 1-1 1H8.4A4.5 4.9 0 0 1 8.4 3.1zM12 5.5h4M12 10.5h4" stroke="#ced0d6" stroke-width="1" fill="none" stroke-linecap="round" stroke-linejoin="round" /><path d="M3.9 6.4H1.4a.9.9 0 0 0-.9.9v1.4a.9.9 0 0 0 .9.9h2.5" stroke="#ced0d6" stroke-width="1" fill="none" stroke-linecap="round" stroke-linejoin="round" /></svg>
<span id="t46" class="t" style="left:230.5px;top:1172.26px;font-size:18px;line-height:25px;color:#dfe1e5;letter-spacing:-0.507px;"><span class="a">console_7</span></span>
<svg style="left:141.0px;top:1208.0px;" width="24" height="24" viewBox="0 0 16 16" fill="none"><path d="M4.4 6.2l3.6 3.6 3.6-3.6" stroke="#b4b8bf" stroke-width="1" fill="none" stroke-linecap="round" stroke-linejoin="round" /></svg>
<svg style="left:172.6px;top:1208.0px;" width="24" height="24" viewBox="0 0 16 16" fill="none"><path d="M0.58 1.67C0.74 1.53 1.15 0.86 1.55 0.86C1.95 0.86 2.43 1.40 3.00 1.67C3.57 1.94 4.30 2.15 4.95 2.47C5.60 2.79 6.30 3.14 6.89 3.60C7.48 4.06 8.07 4.65 8.50 5.22C8.93 5.79 9.18 6.38 9.48 7.00C9.78 7.62 9.89 8.43 10.29 8.94C10.69 9.45 11.34 9.76 11.90 10.08C12.46 10.40 13.25 10.64 13.68 10.88C14.11 11.12 14.36 11.42 14.49 11.53L13.36 11.77L11.74 12.18L13.3 13.2L14.98 14.44" stroke="#12a6ee" stroke-width="0.8" fill="none" stroke-linecap="round" stroke-linejoin="round" /><path d="M0.58 1.67C0.71 1.89 1.12 2.50 1.39 2.96C1.66 3.42 1.93 3.99 2.20 4.42C2.47 4.85 2.77 5.23 3.00 5.55C3.23 5.87 3.57 6.01 3.57 6.36C3.57 6.71 3.13 7.25 3.00 7.65C2.87 8.05 2.71 8.40 2.77 8.78C2.83 9.16 3.10 9.63 3.33 9.91C3.56 10.19 4.00 10.38 4.14 10.48L4.46 9.59L4.79 8.46L5.6 9.75L7.05 11.69" stroke="#12a6ee" stroke-width="0.8" fill="none" stroke-linecap="round" stroke-linejoin="round" /><circle cx="4.22" cy="3.69" r="0.42" fill="#12a6ee"/></svg>
<span id="t47" class="t" style="left:202px;top:1208.26px;font-size:18px;line-height:25px;color:#dfe1e5;letter-spacing:-0.008px;"><span class="a">MySQL-@192.168.128.128</span></span>
<svg style="left:169.9px;top:1244.0px;" width="24" height="24" viewBox="0 0 16 16" fill="none"><path d="M4.4 6.2l3.6 3.6 3.6-3.6" stroke="#b4b8bf" stroke-width="1" fill="none" stroke-linecap="round" stroke-linejoin="round" /></svg>
<svg style="left:201.0px;top:1244.0px;" width="24" height="24" viewBox="0 0 16 16" fill="none"><path d="M8.4 3.1H10.5a1 1 0 0 1 1 1v7.8a1 1 0 0 1-1 1H8.4A4.5 4.9 0 0 1 8.4 3.1zM12 5.5h4M12 10.5h4" stroke="#ced0d6" stroke-width="1" fill="none" stroke-linecap="round" stroke-linejoin="round" /><path d="M3.9 6.4H1.4a.9.9 0 0 0-.9.9v1.4a.9.9 0 0 0 .9.9h2.5" stroke="#ced0d6" stroke-width="1" fill="none" stroke-linecap="round" stroke-linejoin="round" /></svg>
<div style="left:218.6px;top:1260.6px;width:6.2px;height:6.2px;border-radius:50%;background:#0be00b;"></div>
<span id="t48" class="t" style="left:230.5px;top:1244.26px;font-size:18px;line-height:25px;color:#dfe1e5;letter-spacing:-0.451px;"><span class="a">console_2</span></span>
<span id="t49" class="t" style="left:323.75px;top:1244.26px;font-size:18px;line-height:25px;color:#6f737a;letter-spacing:-0.086px;"><span class="a">379 ms</span></span>
<svg style="left:229.5px;top:1280.0px;" width="24" height="24" viewBox="0 0 16 16" fill="none"><path d="M0.58 1.67C0.74 1.53 1.15 0.86 1.55 0.86C1.95 0.86 2.43 1.40 3.00 1.67C3.57 1.94 4.30 2.15 4.95 2.47C5.60 2.79 6.30 3.14 6.89 3.60C7.48 4.06 8.07 4.65 8.50 5.22C8.93 5.79 9.18 6.38 9.48 7.00C9.78 7.62 9.89 8.43 10.29 8.94C10.69 9.45 11.34 9.76 11.90 10.08C12.46 10.40 13.25 10.64 13.68 10.88C14.11 11.12 14.36 11.42 14.49 11.53L13.36 11.77L11.74 12.18L13.3 13.2L14.98 14.44" stroke="#12a6ee" stroke-width="0.8" fill="none" stroke-linecap="round" stroke-linejoin="round" /><path d="M0.58 1.67C0.71 1.89 1.12 2.50 1.39 2.96C1.66 3.42 1.93 3.99 2.20 4.42C2.47 4.85 2.77 5.23 3.00 5.55C3.23 5.87 3.57 6.01 3.57 6.36C3.57 6.71 3.13 7.25 3.00 7.65C2.87 8.05 2.71 8.40 2.77 8.78C2.83 9.16 3.10 9.63 3.33 9.91C3.56 10.19 4.00 10.38 4.14 10.48L4.46 9.59L4.79 8.46L5.6 9.75L7.05 11.69" stroke="#12a6ee" stroke-width="0.8" fill="none" stroke-linecap="round" stroke-linejoin="round" /><circle cx="4.22" cy="3.69" r="0.42" fill="#12a6ee"/></svg>
<span id="t50" class="t" style="left:258px;top:1280.26px;font-size:18px;line-height:25px;color:#dfe1e5;letter-spacing:-0.396px;"><span class="a">console_2</span></span>
<span id="t51" class="t" style="left:352px;top:1280.26px;font-size:18px;line-height:25px;color:#6f737a;letter-spacing:-0.211px;"><span class="a">379 ms</span></span>
<div style="left:146px;top:1470px;width:310px;height:12px;background:#4b4d52;"></div>
</div></div>
<svg style="left:476.75px;top:1048.5px;" width="24" height="24" viewBox="0 0 16 16" fill="none"><rect x="1.5" y="2.5" width="13" height="11" rx="2" stroke="#ced0d6" stroke-width="1" fill="none"/><path d="M4.5 6l2.5 2-2.5 2M8.5 10.5h3" stroke="#ced0d6" stroke-width="1" fill="none" stroke-linecap="round" stroke-linejoin="round" /></svg>
<span id="t52" class="t" style="left:509px;top:1050.26px;font-size:18px;line-height:25px;color:#dfe1e5;letter-spacing:-0.500px;">输出</span>
<svg style="left:581.0px;top:1048.5px;" width="24" height="24" viewBox="0 0 16 16" fill="none"><rect x="1.5" y="2.5" width="13" height="11" rx="2" stroke="#ced0d6" stroke-width="1" fill="#43454a"/><path d="M1.5 5.4h13M6 2.5v11M10.5 2.5v11" stroke="#ced0d6" stroke-width="1" fill="none" stroke-linecap="round" stroke-linejoin="round" /></svg>
<span id="t53" class="t" style="left:613px;top:1049.96px;font-size:18px;line-height:25px;color:#dfe1e5;letter-spacing:0.216px;"><span class="a">-- </span>调用</span>
<svg style="left:676.75px;top:1048.5px;" width="24" height="24" viewBox="0 0 16 16" fill="none"><path d="M4.8 4.8l6.4 6.4M11.2 4.8l-6.4 6.4" stroke="#868a91" stroke-width="1" fill="none" stroke-linecap="round" stroke-linejoin="round" /></svg>
<div style="left:562px;top:1084px;width:149.75px;height:3px;background:#3574f0;"></div>
<div style="left:472.5px;top:1096px;width:33px;height:33px;border-radius:6px;background:#43454a;"></div>
<svg style="left:477.0px;top:1100.5px;" width="24" height="24" viewBox="0 0 16 16" fill="none"><rect x="1.5" y="2.5" width="13" height="11" rx="2" stroke="#ced0d6" stroke-width="1" fill="#43454a"/><path d="M1.5 5.4h13M6 2.5v11M10.5 2.5v11" stroke="#ced0d6" stroke-width="1" fill="none" stroke-linecap="round" stroke-linejoin="round" /></svg>
<svg style="left:516.0px;top:1100.5px;" width="24" height="24" viewBox="0 0 16 16" fill="none"><path d="M1.3 2.2v11.5h13.5" stroke="#ced0d6" stroke-width="1" fill="none" stroke-linecap="round" stroke-linejoin="round" /><path d="M1.8 9L5.4 5.1L9.5 9.9L14.8 4.8" stroke="#ced0d6" stroke-width="1" fill="none" stroke-linecap="round" stroke-linejoin="round" /><circle cx="5.4" cy="5.1" r="1.1" stroke="#ced0d6" stroke-width="1" fill="#2b2d30"/><circle cx="9.5" cy="9.9" r="1.1" stroke="#ced0d6" stroke-width="1" fill="#2b2d30"/><circle cx="14.6" cy="4.8" r="1.1" stroke="#ced0d6" stroke-width="1" fill="#2b2d30"/></svg>
<div style="left:552.25px;top:1098px;width:1.5px;height:29px;background:#43454a;"></div>
<svg style="left:566.0px;top:1100.5px;" width="24" height="24" viewBox="0 0 16 16" fill="none"><g transform="translate(8 8) scale(0.94) translate(-8 -8)"><path d="M2.5 9.2A5.3 5.3 0 0 1 11.3 3.9M13.5 6.8A5.3 5.3 0 0 1 4.7 12.1" stroke="#ced0d6" stroke-width="1.06" fill="none" stroke-linecap="round" stroke-linejoin="round" /><path d="M0.6 7.5L2.3 9.6L4.7 8.0M11.3 8.0L13.7 6.5L15.4 8.5" stroke="#ced0d6" stroke-width="1.06" fill="none" stroke-linecap="round" stroke-linejoin="round" /></g></svg>
<svg style="left:604.75px;top:1100.5px;" width="24" height="24" viewBox="0 0 16 16" fill="none"><circle cx="8" cy="8" r="6.5" stroke="#ced0d6" stroke-width="1" fill="none"/><path d="M8 4.3V8l2.6 1.6" stroke="#ced0d6" stroke-width="1" fill="none" stroke-linecap="round" stroke-linejoin="round" /></svg>
<svg style="left:625px;top:1120.5px;" width="6" height="6" viewBox="0 0 6 6" fill="none"><path d="M5.6 0V5.6H0z" fill="#ced0d6"/></svg>
<div style="left:647px;top:1104px;width:18px;height:18px;border-radius:3px;background:#595b5e;"></div>
<div style="left:680px;top:1098px;width:1.5px;height:29px;background:#43454a;"></div>
<svg style="left:692.5px;top:1100.5px;" width="24" height="24" viewBox="0 0 16 16" fill="none"><path d="M4.7 2.7h7.3M6 2.7v4.3c0 1.2-2.2 2-2.2 3.9h8.9c0-1.9-2.4-2.7-2.4-3.9V2.7M8.3 10.9v4.2" stroke="#ced0d6" stroke-width="1" fill="none" stroke-linecap="round" stroke-linejoin="round" /></svg>
<svg style="left:731.0px;top:1100.5px;" width="24" height="24" viewBox="0 0 16 16" fill="none"><circle cx="7" cy="7" r="4.5" stroke="#ced0d6" stroke-width="1" fill="none"/><path d="M10.5 10.5L14 14" stroke="#ced0d6" stroke-width="1" fill="none" stroke-linecap="round" stroke-linejoin="round" /></svg>
<div style="left:766px;top:1096px;width:33px;height:33px;border-radius:6px;background:#43454a;"></div>
<svg style="left:770px;top:1100px;" width="26" height="26" viewBox="0 0 26 26" fill="none"><path d="M13 19.6H5.4a2.2 2.2 0 0 1-2.2-2.2V6.6a2.2 2.2 0 0 1 2.2-2.2h14.2a2.2 2.2 0 0 1 2.2 2.2v3.2M8.8 4.4v15.2" stroke="#ced0d6" stroke-width="1.5" fill="none" stroke-linecap="round" stroke-linejoin="round" /><path d="M12.4 12.6h11.8l-4.4 5.6v5.6l-3-1.6v-4z" stroke="#548af7" stroke-width="1.5" fill="#25324d" stroke-linecap="round" stroke-linejoin="round" /></svg>
<span id="t54" class="t" style="left:2213.2px;top:1101.76px;font-size:16px;line-height:22px;color:#dfe1e5;letter-spacing:-2.091px;"><span class="a">CSV</span></span>
<svg style="left:2244.0px;top:1101.0px;" width="24" height="24" viewBox="0 0 16 16" fill="none"><path d="M4.4 6.2l3.6 3.6 3.6-3.6" stroke="#ced0d6" stroke-width="1" fill="none" stroke-linecap="round" stroke-linejoin="round" /></svg>
<div style="left:2277.5px;top:1098px;width:1.5px;height:29px;background:#43454a;"></div>
<svg style="left:2290.8px;top:1100.5px;" width="24" height="24" viewBox="0 0 16 16" fill="none"><path d="M8 2v8.5M4.5 7.5L8 11l3.5-3.5M2.5 11.5v2.5h11v-2.5" stroke="#ced0d6" stroke-width="1" fill="none" stroke-linecap="round" stroke-linejoin="round" /></svg>
<svg style="left:2329.9px;top:1100.5px;" width="24" height="24" viewBox="0 0 16 16" fill="none"><path d="M8 11V2.5M4.5 6L8 2.5 11.5 6M2.5 11.5v2.5h11v-2.5" stroke="#ced0d6" stroke-width="1" fill="none" stroke-linecap="round" stroke-linejoin="round" /></svg>
<svg style="left:2368.7px;top:1100.0px;" width="24" height="24" viewBox="0 0 16 16" fill="none"><path d="M15.8 4.5H7.2M10.7 1L7.2 4.5l3.5 3.5M0.2 11.4h8.6M5.4 8l3.4 3.4-3.4 3.4" stroke="#ced0d6" stroke-width="1" fill="none" stroke-linecap="round" stroke-linejoin="round" /></svg>
<svg style="left:2388px;top:1121px;" width="6" height="6" viewBox="0 0 6 6" fill="none"><path d="M5.6 0V5.6H0z" fill="#ced0d6"/></svg>
<div style="left:2405.25px;top:1098px;width:1.5px;height:29px;background:#43454a;"></div>
<svg style="left:2417.6px;top:1100.5px;" width="24" height="24" viewBox="0 0 16 16" fill="none"><path d="M1 8s2.5-4.5 7-4.5S15 8 15 8s-2.5 4.5-7 4.5S1 8 1 8z" stroke="#ced0d6" stroke-width="1" fill="none" stroke-linecap="round" stroke-linejoin="round" /><circle cx="8" cy="8" r="2" stroke="#ced0d6" stroke-width="1" fill="none"/></svg>
<svg style="left:2438px;top:1121px;" width="6" height="6" viewBox="0 0 6 6" fill="none"><path d="M5.6 0V5.6H0z" fill="#ced0d6"/></svg>
<svg style="left:2456.7px;top:1100.5px;" width="24" height="24" viewBox="0 0 16 16" fill="none"><path d="M8.00 1.40L8.35 1.41L8.69 1.44L9.03 1.48L9.30 1.89L9.50 2.40L9.65 2.91L9.79 3.33L10.03 3.43L10.27 3.54L10.50 3.67L10.72 3.81L10.94 3.95L11.15 4.11L11.58 4.02L12.10 3.90L12.64 3.82L13.13 3.85L13.34 4.12L13.54 4.41L13.72 4.70L13.88 5.00L14.03 5.32L14.16 5.63L13.94 6.07L13.60 6.50L13.24 6.89L12.94 7.22L12.97 7.48L12.99 7.74L13.00 8.00L12.99 8.26L12.97 8.52L12.94 8.78L13.24 9.11L13.60 9.50L13.94 9.93L14.16 10.37L14.03 10.68L13.88 11.00L13.72 11.30L13.54 11.59L13.34 11.88L13.13 12.15L12.64 12.18L12.10 12.10L11.58 11.98L11.15 11.89L10.94 12.05L10.72 12.19L10.50 12.33L10.27 12.46L10.03 12.57L9.79 12.67L9.65 13.09L9.50 13.60L9.30 14.11L9.03 14.52L8.69 14.56L8.35 14.59L8.00 14.60L7.65 14.59L7.31 14.56L6.97 14.52L6.70 14.11L6.50 13.60L6.35 13.09L6.21 12.67L5.97 12.57L5.73 12.46L5.50 12.33L5.28 12.19L5.06 12.05L4.85 11.89L4.42 11.98L3.90 12.10L3.36 12.18L2.87 12.15L2.66 11.88L2.46 11.59L2.28 11.30L2.12 11.00L1.97 10.68L1.84 10.37L2.06 9.93L2.40 9.50L2.76 9.11L3.06 8.78L3.03 8.52L3.01 8.26L3.00 8.00L3.01 7.74L3.03 7.48L3.06 7.22L2.76 6.89L2.40 6.50L2.06 6.07L1.84 5.63L1.97 5.32L2.12 5.00L2.28 4.70L2.46 4.41L2.66 4.12L2.87 3.85L3.36 3.82L3.90 3.90L4.42 4.02L4.85 4.11L5.06 3.95L5.28 3.81L5.50 3.67L5.73 3.54L5.97 3.43L6.21 3.33L6.35 2.91L6.50 2.40L6.70 1.89L6.97 1.48L7.31 1.44L7.65 1.41Z" stroke="#ced0d6" stroke-width="1" fill="none" stroke-linecap="round" stroke-linejoin="round" /><circle cx="8" cy="8" r="2.1" stroke="#ced0d6" stroke-width="1" fill="none"/></svg>
<svg style="left:2477px;top:1121px;" width="6" height="6" viewBox="0 0 6 6" fill="none"><path d="M5.6 0V5.6H0z" fill="#ced0d6"/></svg>
<div style="left:458px;top:1138px;width:37.5px;height:39px;background:#222326;"></div>
<div style="left:495.5px;top:1138px;width:227.5px;height:39px;background:#2b2d30;"></div>
<div style="left:495px;top:1138px;width:1px;height:80px;background:#313438;"></div>
<div style="left:458px;top:1218px;width:265px;height:1px;background:#313438;"></div>
<div style="left:722.5px;top:1138px;width:1px;height:80px;background:#313438;"></div>
<svg style="left:502.75px;top:1146.5px;" width="24" height="24" viewBox="0 0 16 16" fill="none"><rect x="1.5" y="2.5" width="13" height="11" rx="2" stroke="#ced0d6" stroke-width="1" fill="none"/><path d="M5.5 2.5v11" stroke="#ced0d6" stroke-width="1" fill="none" stroke-linecap="round" stroke-linejoin="round" /></svg>
<span id="t55" class="t m" style="left:533.75px;top:1146.60px;font-size:19.5px;line-height:27px;color:#bcbec4;letter-spacing:-0.047px;">count(<span style="display:inline-block;transform:translateY(4.8px) scale(1.3);">*</span>)</span>
<svg style="left:639.0px;top:1146.5px;" width="24" height="24" viewBox="0 0 16 16" fill="none"><path d="M2 2.5h12L9.5 8v5.5l-3-1.5V8z" stroke="#ced0d6" stroke-width="1" fill="none" stroke-linecap="round" stroke-linejoin="round" /></svg>
<svg style="left:685.5px;top:1146.5px;" width="24" height="24" viewBox="0 0 16 16" fill="none"><path d="M8 3.6l2.5 3.4h-5z" fill="#ced0d6"/><path d="M8 12.4l2.5-3.4h-5z" fill="#868a91"/></svg>
<span id="t56" class="t m" style="left:471px;top:1187.30px;font-size:19.5px;line-height:27px;color:#4b5059;">1</span>
<span id="t57" class="t m" style="left:705.5px;top:1187.30px;font-size:19.5px;line-height:27px;color:#bcbec4;">4</span>
<div style="left:461px;top:1134px;width:269.75px;height:95.5px;border:7px solid #f7393c;box-sizing:border-box;"></div>
<div style="left:1410px;top:1411px;width:137px;height:54px;border-radius:13px;background:#2b2d30;border:1px solid #3e4045;box-sizing:border-box;"></div>
<span id="t58" class="t" style="left:1431px;top:1429.76px;font-size:16px;line-height:22px;color:#dfe1e5;letter-spacing:-0.359px;"><span class="a">1 </span>行</span>
<svg style="left:1464.0px;top:1430.0px;" width="24" height="24" viewBox="0 0 16 16" fill="none"><path d="M4.4 6.2l3.6 3.6 3.6-3.6" stroke="#ced0d6" stroke-width="1" fill="none" stroke-linecap="round" stroke-linejoin="round" /></svg>
<div style="left:1494.25px;top:1423px;width:1.5px;height:29.5px;background:#43454a;"></div>
<svg style="left:1507.7px;top:1426.5px;" width="24" height="24" viewBox="0 0 16 16" fill="none"><circle cx="8" cy="3.1" r="0.85" fill="#ced0d6"/><circle cx="8" cy="8" r="0.85" fill="#ced0d6"/><circle cx="8" cy="12.9" r="0.85" fill="#ced0d6"/></svg>
<span id="t59" class="t" style="left:21px;top:1492.86px;font-size:18px;line-height:25px;color:#a0a3ab;letter-spacing:0.083px;">数据库控制台</span>
<svg style="left:134.75px;top:1493.5px;" width="24" height="24" viewBox="0 0 16 16" fill="none"><path d="M6.2 4.2l4 3.8-4 3.8" stroke="#a0a3ab" stroke-width="1" fill="none" stroke-linecap="round" stroke-linejoin="round" /></svg>
<span id="t60" class="t" style="left:165.7px;top:1492.86px;font-size:18px;line-height:25px;color:#a0a3ab;letter-spacing:0.008px;"><span class="a">MySQL-@192.168.128.128</span></span>
<svg style="left:404.6px;top:1493.5px;" width="24" height="24" viewBox="0 0 16 16" fill="none"><path d="M6.2 4.2l4 3.8-4 3.8" stroke="#a0a3ab" stroke-width="1" fill="none" stroke-linecap="round" stroke-linejoin="round" /></svg>
<svg style="left:435.0px;top:1492.0px;" width="24" height="24" viewBox="0 0 16 16" fill="none"><path d="M0.58 1.67C0.74 1.53 1.15 0.86 1.55 0.86C1.95 0.86 2.43 1.40 3.00 1.67C3.57 1.94 4.30 2.15 4.95 2.47C5.60 2.79 6.30 3.14 6.89 3.60C7.48 4.06 8.07 4.65 8.50 5.22C8.93 5.79 9.18 6.38 9.48 7.00C9.78 7.62 9.89 8.43 10.29 8.94C10.69 9.45 11.34 9.76 11.90 10.08C12.46 10.40 13.25 10.64 13.68 10.88C14.11 11.12 14.36 11.42 14.49 11.53L13.36 11.77L11.74 12.18L13.3 13.2L14.98 14.44" stroke="#12a6ee" stroke-width="0.8" fill="none" stroke-linecap="round" stroke-linejoin="round" /><path d="M0.58 1.67C0.71 1.89 1.12 2.50 1.39 2.96C1.66 3.42 1.93 3.99 2.20 4.42C2.47 4.85 2.77 5.23 3.00 5.55C3.23 5.87 3.57 6.01 3.57 6.36C3.57 6.71 3.13 7.25 3.00 7.65C2.87 8.05 2.71 8.40 2.77 8.78C2.83 9.16 3.10 9.63 3.33 9.91C3.56 10.19 4.00 10.38 4.14 10.48L4.46 9.59L4.79 8.46L5.6 9.75L7.05 11.69" stroke="#12a6ee" stroke-width="0.8" fill="none" stroke-linecap="round" stroke-linejoin="round" /><circle cx="4.22" cy="3.69" r="0.42" fill="#12a6ee"/></svg>
<span id="t61" class="t" style="left:465.2px;top:1492.86px;font-size:18px;line-height:25px;color:#a0a3ab;letter-spacing:-0.023px;"><span class="a">console_2 [MySQL-@192.168.128.128]</span></span>
<span id="t62" class="t" style="left:2013px;top:1492.86px;font-size:18px;line-height:25px;color:#a0a3ab;letter-spacing:-0.147px;"><span class="a">145:1 (16 </span>字符<span class="a">, 1 </span>行 换行符<span class="a">)</span></span>
<span id="t63" class="t" style="left:2265.5px;top:1492.86px;font-size:18px;line-height:25px;color:#a0a3ab;letter-spacing:-2.082px;"><span class="a">CRLF</span></span>
<span id="t64" class="t" style="left:2333.5px;top:1492.86px;font-size:18px;line-height:25px;color:#a0a3ab;letter-spacing:-0.659px;"><span class="a">UTF-8</span></span>
<span id="t65" class="t" style="left:2415px;top:1492.86px;font-size:18px;line-height:25px;color:#a0a3ab;letter-spacing:-0.169px;"><span class="a">4 </span>个空格</span>
<svg style="left:2512.0px;top:1492.5px;" width="24" height="24" viewBox="0 0 16 16" fill="none"><rect x="2.5" y="7.5" width="9" height="6.5" rx="1.5" stroke="#9da0a8" stroke-width="1" fill="none"/><path d="M9.5 7.5V5a2.5 2.5 0 0 1 5 0" stroke="#9da0a8" stroke-width="1" fill="none" stroke-linecap="round" stroke-linejoin="round" /><path d="M7 10v1.5" stroke="#9da0a8" stroke-width="1" fill="none" stroke-linecap="round" stroke-linejoin="round" /></svg>
</body></html>
